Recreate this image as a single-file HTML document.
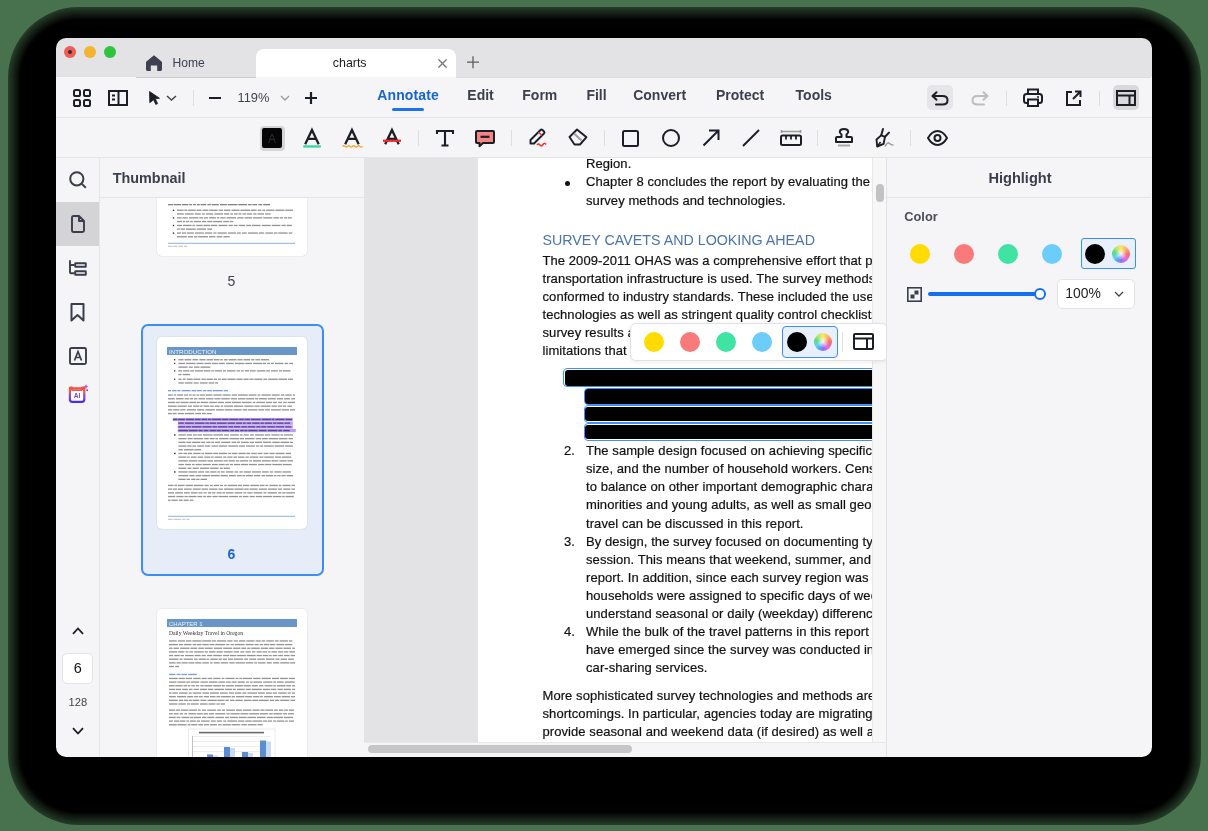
<!DOCTYPE html>
<html><head><meta charset="utf-8">
<style>
*{box-sizing:border-box;margin:0;padding:0}
html,body{width:1208px;height:831px;overflow:hidden}
body{background:#48724e;font-family:"Liberation Sans",sans-serif;position:relative}
.a{position:absolute}
.t{position:absolute;white-space:nowrap}
svg.a{overflow:visible}
#win{will-change:transform;position:absolute;left:0;top:0;width:1208px;height:831px;clip-path:inset(38px 56px 74px 56px round 10px);background:#f5f5f7}
</style></head><body>
<div class="a" style="left:7.5px;top:6.5px;width:1193.0px;height:818.0px;border-radius:71px;background:rgb(38, 60, 41)"></div><div class="a" style="left:8.5px;top:7.5px;width:1191.0px;height:816.0px;border-radius:70px;background:rgb(35, 55, 38)"></div><div class="a" style="left:9.5px;top:8.5px;width:1189.0px;height:814.0px;border-radius:69px;background:rgb(32, 51, 35)"></div><div class="a" style="left:10.5px;top:9.5px;width:1187.0px;height:812.0px;border-radius:68px;background:rgb(29, 46, 31)"></div><div class="a" style="left:11.5px;top:10.5px;width:1185.0px;height:810.0px;border-radius:67px;background:rgb(26, 41, 28)"></div><div class="a" style="left:12.5px;top:11.5px;width:1183.0px;height:808.0px;border-radius:66px;background:rgb(23, 36, 25)"></div><div class="a" style="left:13.5px;top:12.5px;width:1181.0px;height:806.0px;border-radius:65px;background:rgb(20, 31, 21)"></div><div class="a" style="left:14.5px;top:13.5px;width:1179.0px;height:804.0px;border-radius:64px;background:rgb(17, 27, 18)"></div><div class="a" style="left:15.5px;top:14.5px;width:1177.0px;height:802.0px;border-radius:63px;background:rgb(14, 22, 15)"></div><div class="a" style="left:16.5px;top:15.5px;width:1175.0px;height:800.0px;border-radius:62px;background:rgb(11, 17, 12)"></div><div class="a" style="left:17.5px;top:16.5px;width:1173.0px;height:798.0px;border-radius:61px;background:rgb(8, 12, 8)"></div><div class="a" style="left:18.5px;top:17.5px;width:1171.0px;height:796.0px;border-radius:60px;background:rgb(5, 7, 5)"></div><div class="a" style="left:19.5px;top:18.5px;width:1169.0px;height:794.0px;border-radius:59px;background:rgb(2, 2, 2)"></div><div class="a" style="left:20.5px;top:19.5px;width:1167.0px;height:792.0px;border-radius:58px;background:rgb(0, 0, 0)"></div>
<div id="win">

<div class="a" style="left:56px;top:38px;width:1100px;height:39px;background:#e3e3e6"></div>
<div class="a" style="left:64px;top:46px;width:12px;height:12px;background:#f05b56;border-radius:50%"></div>
<div class="a" style="left:84px;top:46px;width:12px;height:12px;background:#f6b42e;border-radius:50%"></div>
<div class="a" style="left:104px;top:46px;width:12px;height:12px;background:#2ec43e;border-radius:50%"></div>
<div class="a" style="left:68px;top:50px;width:4px;height:4px;background:#2a3236;border-radius:50%"></div>
<div class="a" style="left:136px;top:77px;width:120px;height:1px;background:#cbcbcf"></div>
<div class="a" style="left:456px;top:77px;width:695px;height:1px;background:#dcdce0"></div>
<div class="a" style="left:256px;top:49px;width:200px;height:28px;background:#fff;border-radius:8px 8px 0 0"></div>
<svg class="a" style="left:145px;top:54px;" width="18" height="18" viewBox="0 0 18 18"><path d="M9 1.2 L16.6 7.6 Q17 8 17 8.6 V15.6 Q17 17 15.6 17 H12.2 V11.6 H5.8 V17 H2.4 Q1 17 1 15.6 V8.6 Q1 8 1.4 7.6 Z" fill="#3d414f"/></svg>
<div class="t" style="left:172.5px;top:56.76px;font-size:12.1px;line-height:12.1px;color:#3d414f;font-weight:normal;">Home</div>
<div class="t" style="left:332.8px;top:56.50px;font-size:12.4px;line-height:12.4px;color:#1a1a1a;font-weight:normal;">charts</div>
<svg class="a" style="left:437.5px;top:58.5px;" width="9" height="9" viewBox="0 0 9 9"><path d="M0.8 0.8 L8.2 8.2 M8.2 0.8 L0.8 8.2" stroke="#777" stroke-width="1.3" stroke-linecap="round"/></svg>
<svg class="a" style="left:466.5px;top:56.3px;" width="12" height="12.5" viewBox="0 0 12 12.5"><path d="M6 0.3 V12.2 M0 6.2 H12" stroke="#5e5e5e" stroke-width="1.3"/></svg>
<div class="a" style="left:56px;top:78px;width:1100px;height:40px;background:#f5f5f7"></div>
<div class="a" style="left:56px;top:117px;width:1100px;height:1px;background:#e4e4e7"></div>
<svg class="a" style="left:73px;top:89px;" width="18" height="18" viewBox="0 0 18 18"><rect x="1" y="1" width="6" height="6" rx="1.6" fill="none" stroke="#1c1e26" stroke-width="2"/><rect x="1" y="11" width="6" height="6" rx="1.6" fill="none" stroke="#1c1e26" stroke-width="2"/><rect x="11" y="1" width="6" height="6" rx="1.6" fill="none" stroke="#1c1e26" stroke-width="2"/><rect x="11" y="11" width="6" height="6" rx="1.6" fill="none" stroke="#1c1e26" stroke-width="2"/></svg>
<svg class="a" style="left:108px;top:90px;" width="20" height="16" viewBox="0 0 20 16"><rect x="1" y="1" width="18" height="14" fill="none" stroke="#1c1e26" stroke-width="2"/><path d="M10.5 1 V15" stroke="#1c1e26" stroke-width="2"/><path d="M4 5.5 H7 M4 9.5 H7" stroke="#1c1e26" stroke-width="1.8"/></svg>
<svg class="a" style="left:149px;top:91px;" width="11" height="14" viewBox="0 0 11 14"><path d="M0.5 0.5 L10.5 7.2 L6.3 7.8 L8.6 12.6 L6.8 13.5 L4.6 8.8 L0.8 11.7 Z" fill="#1c1e26" stroke="#1c1e26" stroke-width="0.8" stroke-linejoin="round"/></svg>
<svg class="a" style="left:166px;top:95px;" width="11" height="6" viewBox="0 0 11 6"><path d="M1 1 L5.5 5 L10 1" fill="none" stroke="#444" stroke-width="1.5"/></svg>
<div class="a" style="left:193px;top:90px;width:1px;height:16px;background:#dedee2"></div>
<div class="a" style="left:209px;top:97px;width:12px;height:2.2px;background:#1c1e26"></div>
<div class="t" style="left:237.5px;top:91.96px;font-size:12.8px;line-height:12.8px;color:#40444f;font-weight:normal;">119%</div>
<svg class="a" style="left:280px;top:95px;" width="10" height="6" viewBox="0 0 10 6"><path d="M1 1 L5 5 L9 1" fill="none" stroke="#9a9a9a" stroke-width="1.3"/></svg>
<svg class="a" style="left:305px;top:92px;" width="12" height="12" viewBox="0 0 12 12"><path d="M6 0 V12 M0 6 H12" stroke="#1c1e26" stroke-width="2.2"/></svg>
<div class="t" style="left:377.2px;top:88.15px;font-size:14px;line-height:14px;color:#1565cf;font-weight:bold;letter-spacing:0.15px">Annotate</div>
<div class="t" style="left:467.3px;top:88.15px;font-size:14px;line-height:14px;color:#3c404c;font-weight:bold;">Edit</div>
<div class="t" style="left:522.3px;top:88.15px;font-size:14px;line-height:14px;color:#3c404c;font-weight:bold;">Form</div>
<div class="t" style="left:586.4px;top:88.15px;font-size:14px;line-height:14px;color:#3c404c;font-weight:bold;">Fill</div>
<div class="t" style="left:633.2px;top:88.15px;font-size:14px;line-height:14px;color:#3c404c;font-weight:bold;">Convert</div>
<div class="t" style="left:716px;top:88.15px;font-size:14px;line-height:14px;color:#3c404c;font-weight:bold;">Protect</div>
<div class="t" style="left:795.6px;top:88.15px;font-size:14px;line-height:14px;color:#3c404c;font-weight:bold;">Tools</div>
<div class="a" style="left:392px;top:108px;width:32px;height:3px;background:#1a73f0;border-radius:2px"></div>
<div class="a" style="left:927px;top:85px;width:26px;height:25px;background:#e6e6e9;border-radius:5px"></div>
<svg class="a" style="left:931px;top:91px;" width="18" height="15" viewBox="0 0 18 15"><path d="M5.5 1.2 L1.5 5 L5.5 8.8" fill="none" stroke="#1c1e26" stroke-width="2" stroke-linejoin="round" stroke-linecap="round"/><path d="M1.8 5 H11.5 Q16.5 5 16.5 9.3 Q16.5 13.6 11.5 13.6 H5" fill="none" stroke="#1c1e26" stroke-width="2" stroke-linecap="round"/></svg>
<svg class="a" style="left:971px;top:91px;" width="18" height="15" viewBox="0 0 18 15"><path d="M12.5 1.2 L16.5 5 L12.5 8.8" fill="none" stroke="#bdbdbf" stroke-width="2" stroke-linejoin="round" stroke-linecap="round"/><path d="M16.2 5 H6.5 Q1.5 5 1.5 9.3 Q1.5 13.6 6.5 13.6 H13" fill="none" stroke="#bdbdbf" stroke-width="2" stroke-linecap="round"/></svg>
<div class="a" style="left:1006px;top:91px;width:1px;height:15px;background:#dedee2"></div>
<svg class="a" style="left:1023px;top:88px;" width="20" height="19" viewBox="0 0 20 19"><path d="M5 6 V1.5 H15 V6" fill="none" stroke="#1c1e26" stroke-width="2"/><rect x="1" y="6" width="18" height="9" rx="2.5" fill="none" stroke="#1c1e26" stroke-width="2"/><rect x="5" y="11.5" width="10" height="6.5" fill="#f5f5f7" stroke="#1c1e26" stroke-width="2"/><circle cx="15" cy="9" r="1" fill="#1c1e26"/></svg>
<svg class="a" style="left:1065px;top:90px;" width="17" height="17" viewBox="0 0 17 17"><path d="M7 2 H2 V15 H15 V10" fill="none" stroke="#1c1e26" stroke-width="2"/><path d="M8 9 L15 2 M10 1.5 H15.5 V7" fill="none" stroke="#1c1e26" stroke-width="2"/></svg>
<div class="a" style="left:1099px;top:91px;width:1px;height:15px;background:#dedee2"></div>
<div class="a" style="left:1113px;top:85px;width:26px;height:25px;background:#d9d9dc;border-radius:5px"></div>
<svg class="a" style="left:1116px;top:90px;" width="20" height="16" viewBox="0 0 20 16"><rect x="1" y="1" width="18" height="14" fill="none" stroke="#1c1e26" stroke-width="2"/><path d="M1 5.5 H19 M13.5 5.5 V15" stroke="#1c1e26" stroke-width="2"/></svg>
<div class="a" style="left:56px;top:118px;width:1100px;height:39px;background:#f5f5f7"></div>
<div class="a" style="left:56px;top:157px;width:1100px;height:1px;background:#e4e4e7"></div>
<div class="a" style="left:259.5px;top:125.5px;width:25px;height:25px;background:#d5d5d8;border-radius:4px"></div>
<div class="a" style="left:262px;top:128px;width:20px;height:20px;background:#050505;border-radius:2px"></div>
<div class="t" style="left:-28px;width:600px;text-align:center;top:132.84px;font-size:12px;line-height:12px;color:#2a2d38;font-weight:normal;">A</div>
<svg class="a" style="left:303px;top:129px;" width="19" height="19" viewBox="0 0 19 19"><path d="M2.2 15.3 L8.95 0.8999999999999999 L15.7 15.3 M5.1 9.9 H12.8" fill="none" stroke="#1c1e26" stroke-width="2.25"/><rect x="0.3" y="16.3" width="17.6" height="2.3" fill="#35d69b"/></svg>
<svg class="a" style="left:342px;top:129px;" width="20" height="19" viewBox="0 0 20 19"><path d="M3.2 15.3 L9.95 0.8999999999999999 L16.7 15.3 M6.1 9.9 H13.8" fill="none" stroke="#1c1e26" stroke-width="2.25"/><path d="M0.5 17.4 q1.25 -1.6 2.5 0 t2.5 0 t2.5 0 t2.5 0 t2.5 0 t2.5 0 t2.5 0 t2.5 0" fill="none" stroke="#f4a321" stroke-width="1.3"/></svg>
<svg class="a" style="left:383px;top:129px;" width="19" height="19" viewBox="0 0 19 19"><path d="M2.2 15.3 L8.95 0.8999999999999999 L15.7 15.3 M5.1 9.9 H12.8" fill="none" stroke="#1c1e26" stroke-width="2.25"/><rect x="0" y="10.6" width="18" height="2.3" fill="#ee2a2a"/></svg>
<div class="a" style="left:418px;top:130px;width:1px;height:16px;background:#dedee2"></div>
<svg class="a" style="left:436px;top:130px;" width="18" height="17" viewBox="0 0 18 17"><path d="M1 4 V1 H17 V4 M9 1 V15.5 M5.5 15.5 H12.5" fill="none" stroke="#1c1e26" stroke-width="2.1"/></svg>
<svg class="a" style="left:475px;top:130px;" width="20" height="17" viewBox="0 0 20 17"><path d="M2 1 H18 Q19 1 19 2 V12 Q19 13 18 13 H8 L4.5 16.2 V13 H2 Q1 13 1 12 V2 Q1 1 2 1 Z" fill="#f48585" stroke="#1c1e26" stroke-width="2" stroke-linejoin="round"/><path d="M5.5 6.8 H14.5" stroke="#1c1e26" stroke-width="2.2"/></svg>
<div class="a" style="left:511px;top:130px;width:1px;height:16px;background:#dedee2"></div>
<svg class="a" style="left:529px;top:128px;" width="19" height="19" viewBox="0 0 19 19"><path d="M1.5 15.5 V12 L11.5 2 Q12.5 1 13.5 2 L15 3.5 Q16 4.5 15 5.5 L5 15.5 Z" fill="none" stroke="#1c1e26" stroke-width="1.9" stroke-linejoin="round"/><path d="M9.5 4 L13 7.5" stroke="#e33" stroke-width="1.5"/><path d="M8 17 q1.5 -2 3 0 t3 -0.5 t3 0" fill="none" stroke="#e33" stroke-width="1.5"/></svg>
<svg class="a" style="left:568px;top:128px;" width="20" height="19" viewBox="0 0 20 19"><path d="M1.5 9 L9 1.5 L18.5 9.2 L12 16.5 H6.5 Z" fill="none" stroke="#1c1e26" stroke-width="1.9" stroke-linejoin="round"/><path d="M6 5.5 L13.5 12.5" stroke="#a0a0a0" stroke-width="2"/></svg>
<div class="a" style="left:604px;top:130px;width:1px;height:16px;background:#dedee2"></div>
<svg class="a" style="left:622px;top:130px;" width="17" height="17" viewBox="0 0 17 17"><rect x="1" y="1" width="15" height="15" rx="1.5" fill="none" stroke="#1c1e26" stroke-width="2"/></svg>
<svg class="a" style="left:662px;top:129px;" width="18" height="18" viewBox="0 0 18 18"><circle cx="9" cy="9" r="8" fill="none" stroke="#1c1e26" stroke-width="2"/></svg>
<svg class="a" style="left:702px;top:129px;" width="18" height="18" viewBox="0 0 18 18"><path d="M1.5 16.5 L16.5 1.5 M7 1.5 H16.5 V11" fill="none" stroke="#1c1e26" stroke-width="2"/></svg>
<svg class="a" style="left:742px;top:129px;" width="18" height="18" viewBox="0 0 18 18"><path d="M1 17 L17 1" fill="none" stroke="#1c1e26" stroke-width="2"/></svg>
<svg class="a" style="left:780px;top:130px;" width="22" height="16" viewBox="0 0 22 16"><path d="M1 1.5 H21 M1.5 0 V3 M20.5 0 V3" stroke="#9a9a9a" stroke-width="1.6"/><rect x="1" y="5.5" width="20" height="9.5" rx="1.5" fill="none" stroke="#1c1e26" stroke-width="2"/><path d="M6 6 V9.5 M11 6 V9.5 M16 6 V9.5" stroke="#1c1e26" stroke-width="1.8"/></svg>
<div class="a" style="left:817px;top:130px;width:1px;height:16px;background:#dedee2"></div>
<svg class="a" style="left:835px;top:128px;" width="18" height="19" viewBox="0 0 18 19"><path d="M6.5 9 V6.5 Q4.5 5 4.8 3.5 Q5.3 1 9 1 Q12.7 1 13.2 3.5 Q13.5 5 11.5 6.5 V9 H16 Q17 9 17 10 V14 H1 V10 Q1 9 2 9 Z" fill="none" stroke="#1c1e26" stroke-width="2" stroke-linejoin="round"/><path d="M3 17.5 H15" stroke="#a8a8a8" stroke-width="2"/></svg>
<svg class="a" style="left:875px;top:128px;" width="20" height="20" viewBox="0 0 20 20"><path d="M8 1 L6.2 7.2 M14 4.6 L10 8.8" stroke="#1c1e26" stroke-width="2" stroke-linecap="round"/><path d="M6.2 7.4 L1.5 11.5 L2.2 18.5 L8.6 15.8 L10 8.8 Z" fill="none" stroke="#1c1e26" stroke-width="1.9" stroke-linejoin="round"/><path d="M2.2 18.5 L5.6 14" stroke="#1c1e26" stroke-width="1.6"/><path d="M10.3 18 Q12.5 13.5 14.5 15.5 Q16 17 18 17" fill="none" stroke="#a0a0a0" stroke-width="1.6" stroke-linecap="round"/></svg>
<div class="a" style="left:910px;top:130px;width:1px;height:16px;background:#dedee2"></div>
<svg class="a" style="left:927px;top:130px;" width="21" height="16" viewBox="0 0 21 16"><path d="M1 8 Q5 1 10.5 1 Q16 1 20 8 Q16 15 10.5 15 Q5 15 1 8 Z" fill="none" stroke="#1c1e26" stroke-width="2" stroke-linejoin="round"/><circle cx="10.5" cy="8" r="3" fill="none" stroke="#1c1e26" stroke-width="2"/></svg>
<div class="a" style="left:56px;top:158px;width:44px;height:600px;background:#f5f5f7"></div>
<div class="a" style="left:99px;top:158px;width:1px;height:600px;background:#e6e6e9"></div>
<div class="a" style="left:56px;top:202px;width:43px;height:44px;background:#d4d4d6"></div>
<svg class="a" style="left:68.9px;top:170.8px;" width="18" height="18" viewBox="0 0 18 18"><circle cx="7.8" cy="7.8" r="6.6" fill="none" stroke="#3a3e4a" stroke-width="2"/><path d="M12.6 12.6 L16.8 16.8" stroke="#3a3e4a" stroke-width="2"/></svg>
<svg class="a" style="left:70.9px;top:215px;" width="14" height="18" viewBox="0 0 14 18"><path d="M1 2.5 Q1 1 2.5 1 H8 L13 6 V15.5 Q13 17 11.5 17 H2.5 Q1 17 1 15.5 Z M8 1 V6 H13" fill="none" stroke="#3a3e4a" stroke-width="1.9" stroke-linejoin="round"/></svg>
<svg class="a" style="left:69px;top:260px;" width="19" height="17" viewBox="0 0 19 17"><path d="M1 0.3 V12.2 Q1 13.2 2 13.2 H5.6 M1 5 H5.6" fill="none" stroke="#3a3e4a" stroke-width="1.9"/><rect x="6.2" y="3.2" width="10.6" height="3.5" rx="0.3" fill="none" stroke="#3a3e4a" stroke-width="1.9"/><rect x="6.2" y="11.2" width="10.6" height="3.5" rx="0.3" fill="none" stroke="#3a3e4a" stroke-width="1.9"/></svg>
<svg class="a" style="left:70px;top:303px;" width="15" height="19" viewBox="0 0 15 19"><path d="M1.5 1 H13.5 V17.5 L7.5 12 L1.5 17.5 Z" fill="none" stroke="#3a3e4a" stroke-width="2" stroke-linejoin="round"/></svg>
<svg class="a" style="left:69px;top:347px;" width="18" height="18" viewBox="0 0 18 18"><rect x="1" y="1" width="16" height="16" rx="1.5" fill="none" stroke="#3a3e4a" stroke-width="1.9"/><path d="M5.5 13.5 L9 4.5 L12.5 13.5 M6.8 10.5 H11.2" fill="none" stroke="#3a3e4a" stroke-width="1.7"/></svg>
<svg class="a" style="left:68px;top:385px" width="20" height="19" viewBox="0 0 20 19"><defs><linearGradient id="aig" x1="0" y1="0" x2="0" y2="1"><stop offset="0" stop-color="#f2504a"/><stop offset="0.35" stop-color="#f0504e"/><stop offset="0.45" stop-color="#8e4cc8"/><stop offset="0.7" stop-color="#7a48d8"/><stop offset="1" stop-color="#4a28f0"/></linearGradient></defs>
<rect x="1.9" y="3.3" width="14.4" height="13.6" rx="2.6" fill="#fff" stroke="url(#aig)" stroke-width="2.2"/>
<rect x="0.8" y="1.6" width="4.6" height="3.6" rx="1.6" fill="#f2504a"/><rect x="12.8" y="1.6" width="4.6" height="3.6" rx="1.6" fill="#f2504a"/><rect x="4.2" y="4.4" width="9.8" height="1.6" fill="#f2504a"/>
<text x="9.1" y="12.7" font-family="Liberation Sans" font-weight="bold" font-size="6.6" fill="#7048c8" text-anchor="middle">AI</text>
<path d="M18 -1 L18.8 0.9 L20.6 1.6 L18.8 2.3 L18 4.2 L17.2 2.3 L15.4 1.6 L17.2 0.9 Z" fill="#c050c0"/><rect x="18.2" y="4.3" width="1.8" height="1.8" fill="#8a50d8"/></svg>
<svg class="a" style="left:72px;top:627px;" width="12" height="8" viewBox="0 0 12 8"><path d="M1 6.8 L6 1.5 L11 6.8" fill="none" stroke="#1c1e26" stroke-width="1.8"/></svg>
<div class="a" style="left:62.3px;top:653.3px;width:31.2px;height:30.5px;background:#fff;border:1px solid #e3e3e6;border-radius:5px"></div>
<div class="t" style="left:-222.1px;width:600px;text-align:center;top:660.63px;font-size:14.5px;line-height:14.5px;color:#111;font-weight:normal;">6</div>
<div class="t" style="left:-222.1px;width:600px;text-align:center;top:696.52px;font-size:11.2px;line-height:11.2px;color:#444;font-weight:normal;">128</div>
<svg class="a" style="left:72px;top:727px;" width="12" height="8" viewBox="0 0 12 8"><path d="M1 1.2 L6 6.5 L11 1.2" fill="none" stroke="#1c1e26" stroke-width="1.8"/></svg>
<div class="a" style="left:100px;top:158px;width:264px;height:600px;background:#f5f5f7"></div>
<div class="t" style="left:112.7px;top:171.01px;font-size:14.4px;line-height:14.4px;color:#3b3f4b;font-weight:bold;">Thumbnail</div>
<div class="a" style="left:100px;top:197px;width:264px;height:1px;background:#e4e4e7"></div>
<div class="a" style="left:100px;top:198px;width:264px;height:70px;overflow:hidden">
<div class="a" style="left:57px;top:-10px;width:150px;height:68px;background:#fff;border-radius:5px;box-shadow:0 0 0 0.6px rgba(0,0,0,.07)"></div>
</div>
<svg class="a" style="left:0px;top:0px" width="1208" height="831" viewBox="0 0 1208 831"><rect x="168.00" y="204.00" width="4.93" height="1.3" fill="#555" fill-opacity="0.72"/><rect x="173.70" y="204.00" width="7.38" height="1.3" fill="#555" fill-opacity="0.72"/><rect x="181.82" y="204.00" width="6.52" height="1.3" fill="#555" fill-opacity="0.72"/><rect x="189.22" y="204.00" width="2.93" height="1.3" fill="#555" fill-opacity="0.72"/><rect x="193.11" y="204.00" width="2.78" height="1.3" fill="#555" fill-opacity="0.72"/><rect x="196.81" y="204.00" width="3.02" height="1.3" fill="#555" fill-opacity="0.72"/><rect x="200.58" y="204.00" width="5.68" height="1.3" fill="#555" fill-opacity="0.72"/><rect x="207.38" y="204.00" width="3.43" height="1.3" fill="#555" fill-opacity="0.72"/><rect x="211.62" y="204.00" width="7.21" height="1.3" fill="#555" fill-opacity="0.72"/><rect x="220.00" y="204.00" width="6.83" height="1.3" fill="#555" fill-opacity="0.72"/><rect x="227.72" y="204.00" width="9.82" height="1.3" fill="#555" fill-opacity="0.72"/><rect x="238.27" y="204.00" width="8.94" height="1.3" fill="#555" fill-opacity="0.72"/><rect x="248.05" y="204.00" width="3.58" height="1.3" fill="#555" fill-opacity="0.72"/><rect x="252.39" y="204.00" width="4.81" height="1.3" fill="#555" fill-opacity="0.72"/><rect x="258.32" y="204.00" width="3.86" height="1.3" fill="#555" fill-opacity="0.72"/><rect x="263.16" y="204.00" width="6.84" height="1.3" fill="#555" fill-opacity="0.72"/><rect x="172.8" y="209.6" width="1.4" height="1.4" fill="#333"/><rect x="177.00" y="209.60" width="6.61" height="1.3" fill="#6a6a6a" fill-opacity="0.72"/><rect x="184.34" y="209.60" width="2.95" height="1.3" fill="#6a6a6a" fill-opacity="0.72"/><rect x="188.09" y="209.60" width="7.60" height="1.3" fill="#6a6a6a" fill-opacity="0.72"/><rect x="196.61" y="209.60" width="4.86" height="1.3" fill="#6a6a6a" fill-opacity="0.72"/><rect x="202.46" y="209.60" width="5.90" height="1.3" fill="#6a6a6a" fill-opacity="0.72"/><rect x="209.20" y="209.60" width="8.46" height="1.3" fill="#6a6a6a" fill-opacity="0.72"/><rect x="218.71" y="209.60" width="4.33" height="1.3" fill="#6a6a6a" fill-opacity="0.72"/><rect x="224.03" y="209.60" width="6.44" height="1.3" fill="#6a6a6a" fill-opacity="0.72"/><rect x="231.61" y="209.60" width="7.97" height="1.3" fill="#6a6a6a" fill-opacity="0.72"/><rect x="240.42" y="209.60" width="9.85" height="1.3" fill="#6a6a6a" fill-opacity="0.72"/><rect x="251.03" y="209.60" width="5.64" height="1.3" fill="#6a6a6a" fill-opacity="0.72"/><rect x="257.75" y="209.60" width="3.64" height="1.3" fill="#6a6a6a" fill-opacity="0.72"/><rect x="262.33" y="209.60" width="2.79" height="1.3" fill="#6a6a6a" fill-opacity="0.72"/><rect x="266.16" y="209.60" width="8.23" height="1.3" fill="#6a6a6a" fill-opacity="0.72"/><rect x="275.38" y="209.60" width="9.07" height="1.3" fill="#6a6a6a" fill-opacity="0.72"/><rect x="285.30" y="209.60" width="7.71" height="1.3" fill="#6a6a6a" fill-opacity="0.72"/><rect x="177.00" y="213.30" width="6.85" height="1.3" fill="#6a6a6a" fill-opacity="0.72"/><rect x="184.78" y="213.30" width="8.80" height="1.3" fill="#6a6a6a" fill-opacity="0.72"/><rect x="194.75" y="213.30" width="6.06" height="1.3" fill="#6a6a6a" fill-opacity="0.72"/><rect x="201.84" y="213.30" width="2.96" height="1.3" fill="#6a6a6a" fill-opacity="0.72"/><rect x="205.84" y="213.30" width="7.35" height="1.3" fill="#6a6a6a" fill-opacity="0.72"/><rect x="214.39" y="213.30" width="8.66" height="1.3" fill="#6a6a6a" fill-opacity="0.72"/><rect x="223.90" y="213.30" width="5.39" height="1.3" fill="#6a6a6a" fill-opacity="0.72"/><rect x="230.33" y="213.30" width="2.67" height="1.3" fill="#6a6a6a" fill-opacity="0.72"/><rect x="233.93" y="213.30" width="3.76" height="1.3" fill="#6a6a6a" fill-opacity="0.72"/><rect x="238.45" y="213.30" width="2.94" height="1.3" fill="#6a6a6a" fill-opacity="0.72"/><rect x="242.47" y="213.30" width="3.47" height="1.3" fill="#6a6a6a" fill-opacity="0.72"/><rect x="246.77" y="213.30" width="5.43" height="1.3" fill="#6a6a6a" fill-opacity="0.72"/><rect x="253.33" y="213.30" width="3.10" height="1.3" fill="#6a6a6a" fill-opacity="0.72"/><rect x="257.36" y="213.30" width="6.62" height="1.3" fill="#6a6a6a" fill-opacity="0.72"/><rect x="265.13" y="213.30" width="5.47" height="1.3" fill="#6a6a6a" fill-opacity="0.72"/><rect x="172.8" y="217.2" width="1.4" height="1.4" fill="#333"/><rect x="177.00" y="217.20" width="4.59" height="1.3" fill="#6a6a6a" fill-opacity="0.72"/><rect x="182.50" y="217.20" width="5.19" height="1.3" fill="#6a6a6a" fill-opacity="0.72"/><rect x="188.83" y="217.20" width="9.68" height="1.3" fill="#6a6a6a" fill-opacity="0.72"/><rect x="199.29" y="217.20" width="3.82" height="1.3" fill="#6a6a6a" fill-opacity="0.72"/><rect x="203.92" y="217.20" width="4.25" height="1.3" fill="#6a6a6a" fill-opacity="0.72"/><rect x="209.12" y="217.20" width="6.92" height="1.3" fill="#6a6a6a" fill-opacity="0.72"/><rect x="216.87" y="217.20" width="2.53" height="1.3" fill="#6a6a6a" fill-opacity="0.72"/><rect x="220.31" y="217.20" width="5.27" height="1.3" fill="#6a6a6a" fill-opacity="0.72"/><rect x="226.56" y="217.20" width="9.65" height="1.3" fill="#6a6a6a" fill-opacity="0.72"/><rect x="237.25" y="217.20" width="6.37" height="1.3" fill="#6a6a6a" fill-opacity="0.72"/><rect x="244.63" y="217.20" width="7.57" height="1.3" fill="#6a6a6a" fill-opacity="0.72"/><rect x="252.93" y="217.20" width="9.25" height="1.3" fill="#6a6a6a" fill-opacity="0.72"/><rect x="263.26" y="217.20" width="9.06" height="1.3" fill="#6a6a6a" fill-opacity="0.72"/><rect x="273.42" y="217.20" width="5.44" height="1.3" fill="#6a6a6a" fill-opacity="0.72"/><rect x="279.76" y="217.20" width="3.28" height="1.3" fill="#6a6a6a" fill-opacity="0.72"/><rect x="284.06" y="217.20" width="2.97" height="1.3" fill="#6a6a6a" fill-opacity="0.72"/><rect x="287.76" y="217.20" width="4.07" height="1.3" fill="#6a6a6a" fill-opacity="0.72"/><rect x="177.00" y="220.90" width="5.05" height="1.3" fill="#6a6a6a" fill-opacity="0.72"/><rect x="182.78" y="220.90" width="2.50" height="1.3" fill="#6a6a6a" fill-opacity="0.72"/><rect x="186.05" y="220.90" width="3.26" height="1.3" fill="#6a6a6a" fill-opacity="0.72"/><rect x="190.20" y="220.90" width="2.69" height="1.3" fill="#6a6a6a" fill-opacity="0.72"/><rect x="194.03" y="220.90" width="7.11" height="1.3" fill="#6a6a6a" fill-opacity="0.72"/><rect x="201.91" y="220.90" width="4.39" height="1.3" fill="#6a6a6a" fill-opacity="0.72"/><rect x="207.17" y="220.90" width="5.23" height="1.3" fill="#6a6a6a" fill-opacity="0.72"/><rect x="213.16" y="220.90" width="8.87" height="1.3" fill="#6a6a6a" fill-opacity="0.72"/><rect x="223.23" y="220.90" width="5.99" height="1.3" fill="#6a6a6a" fill-opacity="0.72"/><rect x="230.16" y="220.90" width="3.14" height="1.3" fill="#6a6a6a" fill-opacity="0.72"/><rect x="172.8" y="224.8" width="1.4" height="1.4" fill="#333"/><rect x="177.00" y="224.80" width="5.07" height="1.3" fill="#6a6a6a" fill-opacity="0.72"/><rect x="182.90" y="224.80" width="8.72" height="1.3" fill="#6a6a6a" fill-opacity="0.72"/><rect x="192.40" y="224.80" width="2.67" height="1.3" fill="#6a6a6a" fill-opacity="0.72"/><rect x="196.25" y="224.80" width="6.46" height="1.3" fill="#6a6a6a" fill-opacity="0.72"/><rect x="203.48" y="224.80" width="6.57" height="1.3" fill="#6a6a6a" fill-opacity="0.72"/><rect x="210.77" y="224.80" width="6.46" height="1.3" fill="#6a6a6a" fill-opacity="0.72"/><rect x="218.42" y="224.80" width="8.97" height="1.3" fill="#6a6a6a" fill-opacity="0.72"/><rect x="228.44" y="224.80" width="4.46" height="1.3" fill="#6a6a6a" fill-opacity="0.72"/><rect x="233.79" y="224.80" width="3.75" height="1.3" fill="#6a6a6a" fill-opacity="0.72"/><rect x="238.62" y="224.80" width="6.49" height="1.3" fill="#6a6a6a" fill-opacity="0.72"/><rect x="246.21" y="224.80" width="4.97" height="1.3" fill="#6a6a6a" fill-opacity="0.72"/><rect x="251.99" y="224.80" width="8.59" height="1.3" fill="#6a6a6a" fill-opacity="0.72"/><rect x="261.77" y="224.80" width="8.89" height="1.3" fill="#6a6a6a" fill-opacity="0.72"/><rect x="271.77" y="224.80" width="8.64" height="1.3" fill="#6a6a6a" fill-opacity="0.72"/><rect x="281.48" y="224.80" width="4.20" height="1.3" fill="#6a6a6a" fill-opacity="0.72"/><rect x="286.64" y="224.80" width="5.17" height="1.3" fill="#6a6a6a" fill-opacity="0.72"/><rect x="177.00" y="228.50" width="2.71" height="1.3" fill="#6a6a6a" fill-opacity="0.72"/><rect x="180.55" y="228.50" width="4.44" height="1.3" fill="#6a6a6a" fill-opacity="0.72"/><rect x="186.04" y="228.50" width="9.67" height="1.3" fill="#6a6a6a" fill-opacity="0.72"/><rect x="196.64" y="228.50" width="9.53" height="1.3" fill="#6a6a6a" fill-opacity="0.72"/><rect x="207.36" y="228.50" width="4.74" height="1.3" fill="#6a6a6a" fill-opacity="0.72"/><rect x="172.8" y="232.4" width="1.4" height="1.4" fill="#333"/><rect x="177.00" y="232.40" width="4.15" height="1.3" fill="#6a6a6a" fill-opacity="0.72"/><rect x="181.97" y="232.40" width="3.98" height="1.3" fill="#6a6a6a" fill-opacity="0.72"/><rect x="186.74" y="232.40" width="7.18" height="1.3" fill="#6a6a6a" fill-opacity="0.72"/><rect x="195.08" y="232.40" width="8.80" height="1.3" fill="#6a6a6a" fill-opacity="0.72"/><rect x="204.82" y="232.40" width="7.40" height="1.3" fill="#6a6a6a" fill-opacity="0.72"/><rect x="213.32" y="232.40" width="3.14" height="1.3" fill="#6a6a6a" fill-opacity="0.72"/><rect x="217.48" y="232.40" width="9.32" height="1.3" fill="#6a6a6a" fill-opacity="0.72"/><rect x="227.90" y="232.40" width="8.13" height="1.3" fill="#6a6a6a" fill-opacity="0.72"/><rect x="236.96" y="232.40" width="3.84" height="1.3" fill="#6a6a6a" fill-opacity="0.72"/><rect x="241.89" y="232.40" width="4.99" height="1.3" fill="#6a6a6a" fill-opacity="0.72"/><rect x="247.99" y="232.40" width="9.79" height="1.3" fill="#6a6a6a" fill-opacity="0.72"/><rect x="258.67" y="232.40" width="5.51" height="1.3" fill="#6a6a6a" fill-opacity="0.72"/><rect x="265.36" y="232.40" width="7.94" height="1.3" fill="#6a6a6a" fill-opacity="0.72"/><rect x="274.08" y="232.40" width="3.45" height="1.3" fill="#6a6a6a" fill-opacity="0.72"/><rect x="278.31" y="232.40" width="9.29" height="1.3" fill="#6a6a6a" fill-opacity="0.72"/><rect x="288.70" y="232.40" width="3.60" height="1.3" fill="#6a6a6a" fill-opacity="0.72"/><rect x="177.00" y="236.10" width="9.85" height="1.3" fill="#6a6a6a" fill-opacity="0.72"/><rect x="187.88" y="236.10" width="5.13" height="1.3" fill="#6a6a6a" fill-opacity="0.72"/><rect x="193.98" y="236.10" width="3.48" height="1.3" fill="#6a6a6a" fill-opacity="0.72"/><rect x="198.17" y="236.10" width="9.78" height="1.3" fill="#6a6a6a" fill-opacity="0.72"/><rect x="208.98" y="236.10" width="6.45" height="1.3" fill="#6a6a6a" fill-opacity="0.72"/><rect x="216.60" y="236.10" width="5.75" height="1.3" fill="#6a6a6a" fill-opacity="0.72"/><rect x="223.48" y="236.10" width="6.17" height="1.3" fill="#6a6a6a" fill-opacity="0.72"/><rect x="168" y="242.8" width="127" height="1" fill="#8fb0d8"/><rect x="168.00" y="245.80" width="4.39" height="0.9" fill="#999" fill-opacity="0.72"/><rect x="173.24" y="245.80" width="4.30" height="0.9" fill="#999" fill-opacity="0.72"/><rect x="178.53" y="245.80" width="4.45" height="0.9" fill="#999" fill-opacity="0.72"/><rect x="183.89" y="245.80" width="3.48" height="0.9" fill="#999" fill-opacity="0.72"/></svg>
<div class="t" style="left:-68.5px;width:600px;text-align:center;top:274.05px;font-size:14px;line-height:14px;color:#3c3f48;font-weight:normal;">5</div>
<div class="a" style="left:140.5px;top:323.5px;width:183px;height:252px;background:#e6edf8;border:2px solid #3b8ef3;border-radius:7px"></div>
<div class="a" style="left:157px;top:337px;width:150px;height:192px;background:#fff;border-radius:5px;box-shadow:0 0 0 0.6px rgba(0,0,0,.07)"></div>
<div class="a" style="left:167px;top:347px;width:130px;height:8px;background:#6896c8"></div>
<svg class="a" style="left:0px;top:0px" width="1208" height="831" viewBox="0 0 1208 831"><text x="169" y="353.6" font-family="Liberation Sans" font-size="6.2" fill="#eef3fa">INTRODUCTION</text><rect x="174" y="359.1" width="1.3" height="1.3" fill="#333"/><rect x="178.40" y="359.10" width="5.15" height="1.3" fill="#6a6a6a" fill-opacity="0.72"/><rect x="184.48" y="359.10" width="6.88" height="1.3" fill="#6a6a6a" fill-opacity="0.72"/><rect x="192.51" y="359.10" width="5.65" height="1.3" fill="#6a6a6a" fill-opacity="0.72"/><rect x="199.32" y="359.10" width="6.26" height="1.3" fill="#6a6a6a" fill-opacity="0.72"/><rect x="206.55" y="359.10" width="6.43" height="1.3" fill="#6a6a6a" fill-opacity="0.72"/><rect x="213.69" y="359.10" width="5.80" height="1.3" fill="#6a6a6a" fill-opacity="0.72"/><rect x="220.28" y="359.10" width="2.53" height="1.3" fill="#6a6a6a" fill-opacity="0.72"/><rect x="223.91" y="359.10" width="3.79" height="1.3" fill="#6a6a6a" fill-opacity="0.72"/><rect x="228.64" y="359.10" width="7.94" height="1.3" fill="#6a6a6a" fill-opacity="0.72"/><rect x="237.56" y="359.10" width="4.94" height="1.3" fill="#6a6a6a" fill-opacity="0.72"/><rect x="243.46" y="359.10" width="6.67" height="1.3" fill="#6a6a6a" fill-opacity="0.72"/><rect x="251.22" y="359.10" width="3.30" height="1.3" fill="#6a6a6a" fill-opacity="0.72"/><rect x="255.49" y="359.10" width="4.36" height="1.3" fill="#6a6a6a" fill-opacity="0.72"/><rect x="260.70" y="359.10" width="8.29" height="1.3" fill="#6a6a6a" fill-opacity="0.72"/><rect x="174" y="362.8" width="1.3" height="1.3" fill="#333"/><rect x="178.40" y="362.80" width="6.71" height="1.3" fill="#6a6a6a" fill-opacity="0.72"/><rect x="186.19" y="362.80" width="9.34" height="1.3" fill="#6a6a6a" fill-opacity="0.72"/><rect x="196.46" y="362.80" width="7.09" height="1.3" fill="#6a6a6a" fill-opacity="0.72"/><rect x="204.50" y="362.80" width="6.34" height="1.3" fill="#6a6a6a" fill-opacity="0.72"/><rect x="211.89" y="362.80" width="5.89" height="1.3" fill="#6a6a6a" fill-opacity="0.72"/><rect x="218.75" y="362.80" width="6.09" height="1.3" fill="#6a6a6a" fill-opacity="0.72"/><rect x="226.01" y="362.80" width="7.74" height="1.3" fill="#6a6a6a" fill-opacity="0.72"/><rect x="234.89" y="362.80" width="9.57" height="1.3" fill="#6a6a6a" fill-opacity="0.72"/><rect x="245.29" y="362.80" width="6.70" height="1.3" fill="#6a6a6a" fill-opacity="0.72"/><rect x="253.15" y="362.80" width="8.80" height="1.3" fill="#6a6a6a" fill-opacity="0.72"/><rect x="262.72" y="362.80" width="3.41" height="1.3" fill="#6a6a6a" fill-opacity="0.72"/><rect x="267.06" y="362.80" width="3.04" height="1.3" fill="#6a6a6a" fill-opacity="0.72"/><rect x="270.92" y="362.80" width="3.05" height="1.3" fill="#6a6a6a" fill-opacity="0.72"/><rect x="275.00" y="362.80" width="8.38" height="1.3" fill="#6a6a6a" fill-opacity="0.72"/><rect x="284.53" y="362.80" width="3.66" height="1.3" fill="#6a6a6a" fill-opacity="0.72"/><rect x="289.25" y="362.80" width="3.75" height="1.3" fill="#6a6a6a" fill-opacity="0.72"/><rect x="178.40" y="366.50" width="9.12" height="1.3" fill="#6a6a6a" fill-opacity="0.72"/><rect x="188.71" y="366.50" width="4.15" height="1.3" fill="#6a6a6a" fill-opacity="0.72"/><rect x="194.03" y="366.50" width="5.49" height="1.3" fill="#6a6a6a" fill-opacity="0.72"/><rect x="200.46" y="366.50" width="9.92" height="1.3" fill="#6a6a6a" fill-opacity="0.72"/><rect x="174" y="370.2" width="1.3" height="1.3" fill="#333"/><rect x="178.40" y="370.20" width="3.71" height="1.3" fill="#6a6a6a" fill-opacity="0.72"/><rect x="183.03" y="370.20" width="6.37" height="1.3" fill="#6a6a6a" fill-opacity="0.72"/><rect x="190.26" y="370.20" width="3.97" height="1.3" fill="#6a6a6a" fill-opacity="0.72"/><rect x="195.09" y="370.20" width="7.92" height="1.3" fill="#6a6a6a" fill-opacity="0.72"/><rect x="203.72" y="370.20" width="6.66" height="1.3" fill="#6a6a6a" fill-opacity="0.72"/><rect x="211.29" y="370.20" width="2.64" height="1.3" fill="#6a6a6a" fill-opacity="0.72"/><rect x="214.79" y="370.20" width="7.18" height="1.3" fill="#6a6a6a" fill-opacity="0.72"/><rect x="222.93" y="370.20" width="2.98" height="1.3" fill="#6a6a6a" fill-opacity="0.72"/><rect x="227.10" y="370.20" width="8.41" height="1.3" fill="#6a6a6a" fill-opacity="0.72"/><rect x="236.70" y="370.20" width="3.29" height="1.3" fill="#6a6a6a" fill-opacity="0.72"/><rect x="240.82" y="370.20" width="2.80" height="1.3" fill="#6a6a6a" fill-opacity="0.72"/><rect x="244.71" y="370.20" width="4.53" height="1.3" fill="#6a6a6a" fill-opacity="0.72"/><rect x="250.00" y="370.20" width="5.67" height="1.3" fill="#6a6a6a" fill-opacity="0.72"/><rect x="256.82" y="370.20" width="8.64" height="1.3" fill="#6a6a6a" fill-opacity="0.72"/><rect x="266.29" y="370.20" width="3.62" height="1.3" fill="#6a6a6a" fill-opacity="0.72"/><rect x="271.07" y="370.20" width="6.78" height="1.3" fill="#6a6a6a" fill-opacity="0.72"/><rect x="278.90" y="370.20" width="3.17" height="1.3" fill="#6a6a6a" fill-opacity="0.72"/><rect x="282.80" y="370.20" width="7.66" height="1.3" fill="#6a6a6a" fill-opacity="0.72"/><rect x="178.40" y="373.90" width="3.04" height="1.3" fill="#6a6a6a" fill-opacity="0.72"/><rect x="182.61" y="373.90" width="7.25" height="1.3" fill="#6a6a6a" fill-opacity="0.72"/><rect x="174" y="378.6" width="1.3" height="1.3" fill="#333"/><rect x="178.40" y="378.60" width="3.13" height="1.3" fill="#6a6a6a" fill-opacity="0.72"/><rect x="182.66" y="378.60" width="3.00" height="1.3" fill="#6a6a6a" fill-opacity="0.72"/><rect x="186.79" y="378.60" width="5.90" height="1.3" fill="#6a6a6a" fill-opacity="0.72"/><rect x="193.56" y="378.60" width="6.65" height="1.3" fill="#6a6a6a" fill-opacity="0.72"/><rect x="201.37" y="378.60" width="4.51" height="1.3" fill="#6a6a6a" fill-opacity="0.72"/><rect x="206.64" y="378.60" width="6.45" height="1.3" fill="#6a6a6a" fill-opacity="0.72"/><rect x="213.92" y="378.60" width="3.32" height="1.3" fill="#6a6a6a" fill-opacity="0.72"/><rect x="218.02" y="378.60" width="2.88" height="1.3" fill="#6a6a6a" fill-opacity="0.72"/><rect x="221.70" y="378.60" width="4.84" height="1.3" fill="#6a6a6a" fill-opacity="0.72"/><rect x="227.39" y="378.60" width="8.20" height="1.3" fill="#6a6a6a" fill-opacity="0.72"/><rect x="236.43" y="378.60" width="6.25" height="1.3" fill="#6a6a6a" fill-opacity="0.72"/><rect x="243.47" y="378.60" width="5.10" height="1.3" fill="#6a6a6a" fill-opacity="0.72"/><rect x="249.28" y="378.60" width="4.38" height="1.3" fill="#6a6a6a" fill-opacity="0.72"/><rect x="254.37" y="378.60" width="8.00" height="1.3" fill="#6a6a6a" fill-opacity="0.72"/><rect x="263.34" y="378.60" width="3.92" height="1.3" fill="#6a6a6a" fill-opacity="0.72"/><rect x="268.20" y="378.60" width="9.51" height="1.3" fill="#6a6a6a" fill-opacity="0.72"/><rect x="278.46" y="378.60" width="8.64" height="1.3" fill="#6a6a6a" fill-opacity="0.72"/><rect x="288.02" y="378.60" width="4.98" height="1.3" fill="#6a6a6a" fill-opacity="0.72"/><rect x="178.40" y="382.30" width="5.45" height="1.3" fill="#6a6a6a" fill-opacity="0.72"/><rect x="184.80" y="382.30" width="7.66" height="1.3" fill="#6a6a6a" fill-opacity="0.72"/><rect x="193.65" y="382.30" width="5.07" height="1.3" fill="#6a6a6a" fill-opacity="0.72"/><rect x="199.84" y="382.30" width="7.80" height="1.3" fill="#6a6a6a" fill-opacity="0.72"/><rect x="208.66" y="382.30" width="5.54" height="1.3" fill="#6a6a6a" fill-opacity="0.72"/><rect x="215.06" y="382.30" width="2.91" height="1.3" fill="#6a6a6a" fill-opacity="0.72"/><rect x="168.00" y="390.00" width="3.03" height="1.3" fill="#6a93cc" fill-opacity="0.9"/><rect x="172.10" y="390.00" width="4.42" height="1.3" fill="#6a93cc" fill-opacity="0.9"/><rect x="177.30" y="390.00" width="3.13" height="1.3" fill="#6a93cc" fill-opacity="0.9"/><rect x="181.55" y="390.00" width="9.03" height="1.3" fill="#6a93cc" fill-opacity="0.9"/><rect x="191.62" y="390.00" width="4.61" height="1.3" fill="#6a93cc" fill-opacity="0.9"/><rect x="197.05" y="390.00" width="4.70" height="1.3" fill="#6a93cc" fill-opacity="0.9"/><rect x="202.68" y="390.00" width="3.68" height="1.3" fill="#6a93cc" fill-opacity="0.9"/><rect x="207.29" y="390.00" width="4.47" height="1.3" fill="#6a93cc" fill-opacity="0.9"/><rect x="212.94" y="390.00" width="9.79" height="1.3" fill="#6a93cc" fill-opacity="0.9"/><rect x="223.71" y="390.00" width="4.29" height="1.3" fill="#6a93cc" fill-opacity="0.9"/><rect x="168.00" y="394.40" width="4.82" height="1.3" fill="#6a6a6a" fill-opacity="0.72"/><rect x="173.70" y="394.40" width="2.51" height="1.3" fill="#6a6a6a" fill-opacity="0.72"/><rect x="177.10" y="394.40" width="6.06" height="1.3" fill="#6a6a6a" fill-opacity="0.72"/><rect x="184.11" y="394.40" width="4.01" height="1.3" fill="#6a6a6a" fill-opacity="0.72"/><rect x="189.07" y="394.40" width="2.54" height="1.3" fill="#6a6a6a" fill-opacity="0.72"/><rect x="192.44" y="394.40" width="3.17" height="1.3" fill="#6a6a6a" fill-opacity="0.72"/><rect x="196.51" y="394.40" width="2.81" height="1.3" fill="#6a6a6a" fill-opacity="0.72"/><rect x="200.04" y="394.40" width="4.78" height="1.3" fill="#6a6a6a" fill-opacity="0.72"/><rect x="205.63" y="394.40" width="6.89" height="1.3" fill="#6a6a6a" fill-opacity="0.72"/><rect x="213.49" y="394.40" width="8.13" height="1.3" fill="#6a6a6a" fill-opacity="0.72"/><rect x="222.65" y="394.40" width="7.87" height="1.3" fill="#6a6a6a" fill-opacity="0.72"/><rect x="231.66" y="394.40" width="5.42" height="1.3" fill="#6a6a6a" fill-opacity="0.72"/><rect x="237.94" y="394.40" width="9.89" height="1.3" fill="#6a6a6a" fill-opacity="0.72"/><rect x="248.60" y="394.40" width="7.93" height="1.3" fill="#6a6a6a" fill-opacity="0.72"/><rect x="257.55" y="394.40" width="2.83" height="1.3" fill="#6a6a6a" fill-opacity="0.72"/><rect x="261.50" y="394.40" width="9.19" height="1.3" fill="#6a6a6a" fill-opacity="0.72"/><rect x="271.70" y="394.40" width="8.00" height="1.3" fill="#6a6a6a" fill-opacity="0.72"/><rect x="280.81" y="394.40" width="3.54" height="1.3" fill="#6a6a6a" fill-opacity="0.72"/><rect x="285.32" y="394.40" width="6.28" height="1.3" fill="#6a6a6a" fill-opacity="0.72"/><rect x="292.72" y="394.40" width="2.28" height="1.3" fill="#6a6a6a" fill-opacity="0.72"/><rect x="168.00" y="398.10" width="6.88" height="1.3" fill="#6a6a6a" fill-opacity="0.72"/><rect x="176.03" y="398.10" width="7.62" height="1.3" fill="#6a6a6a" fill-opacity="0.72"/><rect x="184.70" y="398.10" width="4.22" height="1.3" fill="#6a6a6a" fill-opacity="0.72"/><rect x="189.64" y="398.10" width="3.50" height="1.3" fill="#6a6a6a" fill-opacity="0.72"/><rect x="194.01" y="398.10" width="3.29" height="1.3" fill="#6a6a6a" fill-opacity="0.72"/><rect x="198.42" y="398.10" width="6.69" height="1.3" fill="#6a6a6a" fill-opacity="0.72"/><rect x="206.12" y="398.10" width="7.20" height="1.3" fill="#6a6a6a" fill-opacity="0.72"/><rect x="214.36" y="398.10" width="6.17" height="1.3" fill="#6a6a6a" fill-opacity="0.72"/><rect x="221.23" y="398.10" width="8.48" height="1.3" fill="#6a6a6a" fill-opacity="0.72"/><rect x="230.79" y="398.10" width="6.27" height="1.3" fill="#6a6a6a" fill-opacity="0.72"/><rect x="238.03" y="398.10" width="7.44" height="1.3" fill="#6a6a6a" fill-opacity="0.72"/><rect x="246.20" y="398.10" width="8.03" height="1.3" fill="#6a6a6a" fill-opacity="0.72"/><rect x="255.06" y="398.10" width="3.06" height="1.3" fill="#6a6a6a" fill-opacity="0.72"/><rect x="258.95" y="398.10" width="7.97" height="1.3" fill="#6a6a6a" fill-opacity="0.72"/><rect x="267.72" y="398.10" width="8.05" height="1.3" fill="#6a6a6a" fill-opacity="0.72"/><rect x="276.96" y="398.10" width="6.20" height="1.3" fill="#6a6a6a" fill-opacity="0.72"/><rect x="284.05" y="398.10" width="6.09" height="1.3" fill="#6a6a6a" fill-opacity="0.72"/><rect x="291.19" y="398.10" width="3.81" height="1.3" fill="#6a6a6a" fill-opacity="0.72"/><rect x="168.00" y="401.80" width="7.32" height="1.3" fill="#6a6a6a" fill-opacity="0.72"/><rect x="176.06" y="401.80" width="3.61" height="1.3" fill="#6a6a6a" fill-opacity="0.72"/><rect x="180.49" y="401.80" width="8.07" height="1.3" fill="#6a6a6a" fill-opacity="0.72"/><rect x="189.42" y="401.80" width="6.76" height="1.3" fill="#6a6a6a" fill-opacity="0.72"/><rect x="196.88" y="401.80" width="2.95" height="1.3" fill="#6a6a6a" fill-opacity="0.72"/><rect x="200.67" y="401.80" width="7.54" height="1.3" fill="#6a6a6a" fill-opacity="0.72"/><rect x="209.26" y="401.80" width="7.57" height="1.3" fill="#6a6a6a" fill-opacity="0.72"/><rect x="217.67" y="401.80" width="6.37" height="1.3" fill="#6a6a6a" fill-opacity="0.72"/><rect x="224.98" y="401.80" width="6.00" height="1.3" fill="#6a6a6a" fill-opacity="0.72"/><rect x="231.73" y="401.80" width="9.20" height="1.3" fill="#6a6a6a" fill-opacity="0.72"/><rect x="241.74" y="401.80" width="9.84" height="1.3" fill="#6a6a6a" fill-opacity="0.72"/><rect x="252.74" y="401.80" width="2.63" height="1.3" fill="#6a6a6a" fill-opacity="0.72"/><rect x="256.30" y="401.80" width="8.65" height="1.3" fill="#6a6a6a" fill-opacity="0.72"/><rect x="266.13" y="401.80" width="5.87" height="1.3" fill="#6a6a6a" fill-opacity="0.72"/><rect x="272.84" y="401.80" width="4.07" height="1.3" fill="#6a6a6a" fill-opacity="0.72"/><rect x="278.09" y="401.80" width="4.08" height="1.3" fill="#6a6a6a" fill-opacity="0.72"/><rect x="283.16" y="401.80" width="3.56" height="1.3" fill="#6a6a6a" fill-opacity="0.72"/><rect x="287.68" y="401.80" width="7.32" height="1.3" fill="#6a6a6a" fill-opacity="0.72"/><rect x="168.00" y="405.50" width="8.65" height="1.3" fill="#6a6a6a" fill-opacity="0.72"/><rect x="177.61" y="405.50" width="9.15" height="1.3" fill="#6a6a6a" fill-opacity="0.72"/><rect x="187.81" y="405.50" width="4.24" height="1.3" fill="#6a6a6a" fill-opacity="0.72"/><rect x="193.19" y="405.50" width="6.15" height="1.3" fill="#6a6a6a" fill-opacity="0.72"/><rect x="200.05" y="405.50" width="2.53" height="1.3" fill="#6a6a6a" fill-opacity="0.72"/><rect x="203.52" y="405.50" width="5.88" height="1.3" fill="#6a6a6a" fill-opacity="0.72"/><rect x="210.26" y="405.50" width="3.56" height="1.3" fill="#6a6a6a" fill-opacity="0.72"/><rect x="214.68" y="405.50" width="4.87" height="1.3" fill="#6a6a6a" fill-opacity="0.72"/><rect x="220.67" y="405.50" width="2.51" height="1.3" fill="#6a6a6a" fill-opacity="0.72"/><rect x="224.26" y="405.50" width="8.79" height="1.3" fill="#6a6a6a" fill-opacity="0.72"/><rect x="233.82" y="405.50" width="9.45" height="1.3" fill="#6a6a6a" fill-opacity="0.72"/><rect x="244.32" y="405.50" width="9.26" height="1.3" fill="#6a6a6a" fill-opacity="0.72"/><rect x="254.43" y="405.50" width="5.29" height="1.3" fill="#6a6a6a" fill-opacity="0.72"/><rect x="260.62" y="405.50" width="9.99" height="1.3" fill="#6a6a6a" fill-opacity="0.72"/><rect x="271.60" y="405.50" width="5.21" height="1.3" fill="#6a6a6a" fill-opacity="0.72"/><rect x="277.72" y="405.50" width="4.56" height="1.3" fill="#6a6a6a" fill-opacity="0.72"/><rect x="283.01" y="405.50" width="3.26" height="1.3" fill="#6a6a6a" fill-opacity="0.72"/><rect x="287.39" y="405.50" width="4.64" height="1.3" fill="#6a6a6a" fill-opacity="0.72"/><rect x="168.00" y="409.20" width="4.37" height="1.3" fill="#6a6a6a" fill-opacity="0.72"/><rect x="173.20" y="409.20" width="6.33" height="1.3" fill="#6a6a6a" fill-opacity="0.72"/><rect x="180.33" y="409.20" width="5.30" height="1.3" fill="#6a6a6a" fill-opacity="0.72"/><rect x="186.81" y="409.20" width="9.13" height="1.3" fill="#6a6a6a" fill-opacity="0.72"/><rect x="197.05" y="409.20" width="7.23" height="1.3" fill="#6a6a6a" fill-opacity="0.72"/><rect x="205.43" y="409.20" width="9.56" height="1.3" fill="#6a6a6a" fill-opacity="0.72"/><rect x="215.96" y="409.20" width="7.90" height="1.3" fill="#6a6a6a" fill-opacity="0.72"/><rect x="224.59" y="409.20" width="7.99" height="1.3" fill="#6a6a6a" fill-opacity="0.72"/><rect x="233.50" y="409.20" width="8.15" height="1.3" fill="#6a6a6a" fill-opacity="0.72"/><rect x="242.67" y="409.20" width="4.65" height="1.3" fill="#6a6a6a" fill-opacity="0.72"/><rect x="248.04" y="409.20" width="9.45" height="1.3" fill="#6a6a6a" fill-opacity="0.72"/><rect x="258.26" y="409.20" width="6.04" height="1.3" fill="#6a6a6a" fill-opacity="0.72"/><rect x="265.17" y="409.20" width="4.73" height="1.3" fill="#6a6a6a" fill-opacity="0.72"/><rect x="270.97" y="409.20" width="9.82" height="1.3" fill="#6a6a6a" fill-opacity="0.72"/><rect x="281.63" y="409.20" width="7.42" height="1.3" fill="#6a6a6a" fill-opacity="0.72"/><rect x="289.90" y="409.20" width="5.10" height="1.3" fill="#6a6a6a" fill-opacity="0.72"/><rect x="168.00" y="412.90" width="3.75" height="1.3" fill="#6a6a6a" fill-opacity="0.72"/><rect x="172.54" y="412.90" width="4.06" height="1.3" fill="#6a6a6a" fill-opacity="0.72"/><rect x="177.75" y="412.90" width="6.23" height="1.3" fill="#6a6a6a" fill-opacity="0.72"/><rect x="184.79" y="412.90" width="9.30" height="1.3" fill="#6a6a6a" fill-opacity="0.72"/><rect x="195.28" y="412.90" width="5.87" height="1.3" fill="#6a6a6a" fill-opacity="0.72"/><rect x="201.93" y="412.90" width="3.94" height="1.3" fill="#6a6a6a" fill-opacity="0.72"/><rect x="206.61" y="412.90" width="5.06" height="1.3" fill="#6a6a6a" fill-opacity="0.72"/><rect x="172.8" y="417.9" width="120" height="3.2" fill="#b89ef6"/><rect x="177.8" y="421.6" width="115.0" height="3.2" fill="#b89ef6"/><rect x="177.8" y="425.3" width="115.0" height="3.2" fill="#b89ef6"/><rect x="177.8" y="429.0" width="118.0" height="3.2" fill="#b89ef6"/><rect x="173.00" y="418.80" width="4.29" height="1.3" fill="#3c2a66" fill-opacity="0.75"/><rect x="178.12" y="418.80" width="6.77" height="1.3" fill="#3c2a66" fill-opacity="0.75"/><rect x="186.04" y="418.80" width="8.12" height="1.3" fill="#3c2a66" fill-opacity="0.75"/><rect x="195.07" y="418.80" width="5.60" height="1.3" fill="#3c2a66" fill-opacity="0.75"/><rect x="201.63" y="418.80" width="5.33" height="1.3" fill="#3c2a66" fill-opacity="0.75"/><rect x="207.83" y="418.80" width="2.97" height="1.3" fill="#3c2a66" fill-opacity="0.75"/><rect x="211.63" y="418.80" width="9.76" height="1.3" fill="#3c2a66" fill-opacity="0.75"/><rect x="222.15" y="418.80" width="6.28" height="1.3" fill="#3c2a66" fill-opacity="0.75"/><rect x="229.44" y="418.80" width="8.97" height="1.3" fill="#3c2a66" fill-opacity="0.75"/><rect x="239.22" y="418.80" width="4.53" height="1.3" fill="#3c2a66" fill-opacity="0.75"/><rect x="244.58" y="418.80" width="5.50" height="1.3" fill="#3c2a66" fill-opacity="0.75"/><rect x="251.00" y="418.80" width="9.65" height="1.3" fill="#3c2a66" fill-opacity="0.75"/><rect x="261.78" y="418.80" width="9.05" height="1.3" fill="#3c2a66" fill-opacity="0.75"/><rect x="271.54" y="418.80" width="2.74" height="1.3" fill="#3c2a66" fill-opacity="0.75"/><rect x="275.33" y="418.80" width="9.22" height="1.3" fill="#3c2a66" fill-opacity="0.75"/><rect x="285.49" y="418.80" width="6.51" height="1.3" fill="#3c2a66" fill-opacity="0.75"/><rect x="178.40" y="422.50" width="5.44" height="1.3" fill="#3c2a66" fill-opacity="0.75"/><rect x="185.00" y="422.50" width="8.69" height="1.3" fill="#3c2a66" fill-opacity="0.75"/><rect x="194.82" y="422.50" width="9.79" height="1.3" fill="#3c2a66" fill-opacity="0.75"/><rect x="205.44" y="422.50" width="3.32" height="1.3" fill="#3c2a66" fill-opacity="0.75"/><rect x="209.53" y="422.50" width="6.42" height="1.3" fill="#3c2a66" fill-opacity="0.75"/><rect x="216.99" y="422.50" width="9.56" height="1.3" fill="#3c2a66" fill-opacity="0.75"/><rect x="227.61" y="422.50" width="7.36" height="1.3" fill="#3c2a66" fill-opacity="0.75"/><rect x="236.05" y="422.50" width="5.93" height="1.3" fill="#3c2a66" fill-opacity="0.75"/><rect x="242.95" y="422.50" width="2.80" height="1.3" fill="#3c2a66" fill-opacity="0.75"/><rect x="246.84" y="422.50" width="4.24" height="1.3" fill="#3c2a66" fill-opacity="0.75"/><rect x="252.25" y="422.50" width="7.34" height="1.3" fill="#3c2a66" fill-opacity="0.75"/><rect x="260.44" y="422.50" width="3.46" height="1.3" fill="#3c2a66" fill-opacity="0.75"/><rect x="264.73" y="422.50" width="7.27" height="1.3" fill="#3c2a66" fill-opacity="0.75"/><rect x="273.05" y="422.50" width="3.34" height="1.3" fill="#3c2a66" fill-opacity="0.75"/><rect x="277.12" y="422.50" width="6.43" height="1.3" fill="#3c2a66" fill-opacity="0.75"/><rect x="284.55" y="422.50" width="5.41" height="1.3" fill="#3c2a66" fill-opacity="0.75"/><rect x="178.40" y="426.20" width="7.01" height="1.3" fill="#3c2a66" fill-opacity="0.75"/><rect x="186.11" y="426.20" width="4.76" height="1.3" fill="#3c2a66" fill-opacity="0.75"/><rect x="191.80" y="426.20" width="9.69" height="1.3" fill="#3c2a66" fill-opacity="0.75"/><rect x="202.52" y="426.20" width="9.13" height="1.3" fill="#3c2a66" fill-opacity="0.75"/><rect x="212.59" y="426.20" width="4.26" height="1.3" fill="#3c2a66" fill-opacity="0.75"/><rect x="217.67" y="426.20" width="9.70" height="1.3" fill="#3c2a66" fill-opacity="0.75"/><rect x="228.43" y="426.20" width="4.81" height="1.3" fill="#3c2a66" fill-opacity="0.75"/><rect x="233.94" y="426.20" width="6.24" height="1.3" fill="#3c2a66" fill-opacity="0.75"/><rect x="241.22" y="426.20" width="5.65" height="1.3" fill="#3c2a66" fill-opacity="0.75"/><rect x="247.70" y="426.20" width="7.51" height="1.3" fill="#3c2a66" fill-opacity="0.75"/><rect x="256.36" y="426.20" width="4.20" height="1.3" fill="#3c2a66" fill-opacity="0.75"/><rect x="261.28" y="426.20" width="5.04" height="1.3" fill="#3c2a66" fill-opacity="0.75"/><rect x="267.23" y="426.20" width="7.62" height="1.3" fill="#3c2a66" fill-opacity="0.75"/><rect x="275.65" y="426.20" width="8.48" height="1.3" fill="#3c2a66" fill-opacity="0.75"/><rect x="285.19" y="426.20" width="6.29" height="1.3" fill="#3c2a66" fill-opacity="0.75"/><rect x="178.40" y="429.90" width="9.77" height="1.3" fill="#3c2a66" fill-opacity="0.75"/><rect x="189.03" y="429.90" width="8.65" height="1.3" fill="#3c2a66" fill-opacity="0.75"/><rect x="198.50" y="429.90" width="4.16" height="1.3" fill="#3c2a66" fill-opacity="0.75"/><rect x="203.74" y="429.90" width="4.71" height="1.3" fill="#3c2a66" fill-opacity="0.75"/><rect x="209.62" y="429.90" width="6.22" height="1.3" fill="#3c2a66" fill-opacity="0.75"/><rect x="216.64" y="429.90" width="4.17" height="1.3" fill="#3c2a66" fill-opacity="0.75"/><rect x="221.72" y="429.90" width="7.49" height="1.3" fill="#3c2a66" fill-opacity="0.75"/><rect x="230.38" y="429.90" width="3.60" height="1.3" fill="#3c2a66" fill-opacity="0.75"/><rect x="234.88" y="429.90" width="4.10" height="1.3" fill="#3c2a66" fill-opacity="0.75"/><rect x="240.16" y="429.90" width="3.56" height="1.3" fill="#3c2a66" fill-opacity="0.75"/><rect x="244.45" y="429.90" width="2.95" height="1.3" fill="#3c2a66" fill-opacity="0.75"/><rect x="248.30" y="429.90" width="9.24" height="1.3" fill="#3c2a66" fill-opacity="0.75"/><rect x="258.68" y="429.90" width="8.00" height="1.3" fill="#3c2a66" fill-opacity="0.75"/><rect x="267.87" y="429.90" width="9.49" height="1.3" fill="#3c2a66" fill-opacity="0.75"/><rect x="278.22" y="429.90" width="3.89" height="1.3" fill="#3c2a66" fill-opacity="0.75"/><rect x="283.28" y="429.90" width="6.44" height="1.3" fill="#3c2a66" fill-opacity="0.75"/><rect x="174" y="434.3" width="1.6" height="1.3" fill="#333"/><rect x="178.40" y="434.30" width="7.48" height="1.3" fill="#6a6a6a" fill-opacity="0.72"/><rect x="186.77" y="434.30" width="5.30" height="1.3" fill="#6a6a6a" fill-opacity="0.72"/><rect x="192.94" y="434.30" width="3.77" height="1.3" fill="#6a6a6a" fill-opacity="0.72"/><rect x="197.41" y="434.30" width="4.60" height="1.3" fill="#6a6a6a" fill-opacity="0.72"/><rect x="202.89" y="434.30" width="9.67" height="1.3" fill="#6a6a6a" fill-opacity="0.72"/><rect x="213.32" y="434.30" width="9.73" height="1.3" fill="#6a6a6a" fill-opacity="0.72"/><rect x="223.85" y="434.30" width="5.17" height="1.3" fill="#6a6a6a" fill-opacity="0.72"/><rect x="230.14" y="434.30" width="8.67" height="1.3" fill="#6a6a6a" fill-opacity="0.72"/><rect x="239.72" y="434.30" width="2.87" height="1.3" fill="#6a6a6a" fill-opacity="0.72"/><rect x="243.52" y="434.30" width="5.30" height="1.3" fill="#6a6a6a" fill-opacity="0.72"/><rect x="249.98" y="434.30" width="3.95" height="1.3" fill="#6a6a6a" fill-opacity="0.72"/><rect x="254.81" y="434.30" width="9.23" height="1.3" fill="#6a6a6a" fill-opacity="0.72"/><rect x="264.75" y="434.30" width="5.58" height="1.3" fill="#6a6a6a" fill-opacity="0.72"/><rect x="271.44" y="434.30" width="8.25" height="1.3" fill="#6a6a6a" fill-opacity="0.72"/><rect x="280.41" y="434.30" width="2.76" height="1.3" fill="#6a6a6a" fill-opacity="0.72"/><rect x="283.90" y="434.30" width="9.10" height="1.3" fill="#6a6a6a" fill-opacity="0.72"/><rect x="178.40" y="438.00" width="8.10" height="1.3" fill="#6a6a6a" fill-opacity="0.72"/><rect x="187.65" y="438.00" width="5.04" height="1.3" fill="#6a6a6a" fill-opacity="0.72"/><rect x="193.53" y="438.00" width="9.68" height="1.3" fill="#6a6a6a" fill-opacity="0.72"/><rect x="204.22" y="438.00" width="4.47" height="1.3" fill="#6a6a6a" fill-opacity="0.72"/><rect x="209.75" y="438.00" width="4.87" height="1.3" fill="#6a6a6a" fill-opacity="0.72"/><rect x="215.46" y="438.00" width="2.53" height="1.3" fill="#6a6a6a" fill-opacity="0.72"/><rect x="219.07" y="438.00" width="9.37" height="1.3" fill="#6a6a6a" fill-opacity="0.72"/><rect x="229.46" y="438.00" width="9.57" height="1.3" fill="#6a6a6a" fill-opacity="0.72"/><rect x="239.74" y="438.00" width="4.25" height="1.3" fill="#6a6a6a" fill-opacity="0.72"/><rect x="244.93" y="438.00" width="9.68" height="1.3" fill="#6a6a6a" fill-opacity="0.72"/><rect x="255.79" y="438.00" width="5.40" height="1.3" fill="#6a6a6a" fill-opacity="0.72"/><rect x="262.01" y="438.00" width="5.72" height="1.3" fill="#6a6a6a" fill-opacity="0.72"/><rect x="268.68" y="438.00" width="9.46" height="1.3" fill="#6a6a6a" fill-opacity="0.72"/><rect x="278.94" y="438.00" width="8.52" height="1.3" fill="#6a6a6a" fill-opacity="0.72"/><rect x="288.52" y="438.00" width="4.48" height="1.3" fill="#6a6a6a" fill-opacity="0.72"/><rect x="178.40" y="441.70" width="7.05" height="1.3" fill="#6a6a6a" fill-opacity="0.72"/><rect x="186.32" y="441.70" width="4.90" height="1.3" fill="#6a6a6a" fill-opacity="0.72"/><rect x="192.10" y="441.70" width="8.37" height="1.3" fill="#6a6a6a" fill-opacity="0.72"/><rect x="201.20" y="441.70" width="3.98" height="1.3" fill="#6a6a6a" fill-opacity="0.72"/><rect x="206.26" y="441.70" width="4.35" height="1.3" fill="#6a6a6a" fill-opacity="0.72"/><rect x="211.35" y="441.70" width="2.75" height="1.3" fill="#6a6a6a" fill-opacity="0.72"/><rect x="215.08" y="441.70" width="4.94" height="1.3" fill="#6a6a6a" fill-opacity="0.72"/><rect x="221.21" y="441.70" width="9.13" height="1.3" fill="#6a6a6a" fill-opacity="0.72"/><rect x="231.53" y="441.70" width="4.49" height="1.3" fill="#6a6a6a" fill-opacity="0.72"/><rect x="236.76" y="441.70" width="3.22" height="1.3" fill="#6a6a6a" fill-opacity="0.72"/><rect x="240.93" y="441.70" width="7.82" height="1.3" fill="#6a6a6a" fill-opacity="0.72"/><rect x="249.68" y="441.70" width="4.26" height="1.3" fill="#6a6a6a" fill-opacity="0.72"/><rect x="254.84" y="441.70" width="7.15" height="1.3" fill="#6a6a6a" fill-opacity="0.72"/><rect x="263.03" y="441.70" width="8.11" height="1.3" fill="#6a6a6a" fill-opacity="0.72"/><rect x="272.26" y="441.70" width="7.48" height="1.3" fill="#6a6a6a" fill-opacity="0.72"/><rect x="280.51" y="441.70" width="8.81" height="1.3" fill="#6a6a6a" fill-opacity="0.72"/><rect x="290.16" y="441.70" width="2.84" height="1.3" fill="#6a6a6a" fill-opacity="0.72"/><rect x="178.40" y="445.40" width="8.04" height="1.3" fill="#6a6a6a" fill-opacity="0.72"/><rect x="187.24" y="445.40" width="4.36" height="1.3" fill="#6a6a6a" fill-opacity="0.72"/><rect x="192.41" y="445.40" width="3.65" height="1.3" fill="#6a6a6a" fill-opacity="0.72"/><rect x="197.21" y="445.40" width="6.84" height="1.3" fill="#6a6a6a" fill-opacity="0.72"/><rect x="204.91" y="445.40" width="5.47" height="1.3" fill="#6a6a6a" fill-opacity="0.72"/><rect x="211.57" y="445.40" width="6.30" height="1.3" fill="#6a6a6a" fill-opacity="0.72"/><rect x="218.69" y="445.40" width="8.56" height="1.3" fill="#6a6a6a" fill-opacity="0.72"/><rect x="228.28" y="445.40" width="9.93" height="1.3" fill="#6a6a6a" fill-opacity="0.72"/><rect x="238.97" y="445.40" width="6.06" height="1.3" fill="#6a6a6a" fill-opacity="0.72"/><rect x="246.14" y="445.40" width="8.80" height="1.3" fill="#6a6a6a" fill-opacity="0.72"/><rect x="256.10" y="445.40" width="2.80" height="1.3" fill="#6a6a6a" fill-opacity="0.72"/><rect x="259.75" y="445.40" width="3.39" height="1.3" fill="#6a6a6a" fill-opacity="0.72"/><rect x="263.94" y="445.40" width="9.80" height="1.3" fill="#6a6a6a" fill-opacity="0.72"/><rect x="274.73" y="445.40" width="9.48" height="1.3" fill="#6a6a6a" fill-opacity="0.72"/><rect x="285.09" y="445.40" width="7.91" height="1.3" fill="#6a6a6a" fill-opacity="0.72"/><rect x="178.40" y="449.10" width="4.45" height="1.3" fill="#6a6a6a" fill-opacity="0.72"/><rect x="183.94" y="449.10" width="9.59" height="1.3" fill="#6a6a6a" fill-opacity="0.72"/><rect x="194.28" y="449.10" width="6.97" height="1.3" fill="#6a6a6a" fill-opacity="0.72"/><rect x="174" y="452.8" width="1.6" height="1.3" fill="#333"/><rect x="178.40" y="452.80" width="4.13" height="1.3" fill="#6a6a6a" fill-opacity="0.72"/><rect x="183.42" y="452.80" width="3.56" height="1.3" fill="#6a6a6a" fill-opacity="0.72"/><rect x="187.78" y="452.80" width="4.41" height="1.3" fill="#6a6a6a" fill-opacity="0.72"/><rect x="193.19" y="452.80" width="7.39" height="1.3" fill="#6a6a6a" fill-opacity="0.72"/><rect x="201.38" y="452.80" width="2.59" height="1.3" fill="#6a6a6a" fill-opacity="0.72"/><rect x="204.83" y="452.80" width="7.59" height="1.3" fill="#6a6a6a" fill-opacity="0.72"/><rect x="213.21" y="452.80" width="4.84" height="1.3" fill="#6a6a6a" fill-opacity="0.72"/><rect x="218.85" y="452.80" width="8.46" height="1.3" fill="#6a6a6a" fill-opacity="0.72"/><rect x="228.29" y="452.80" width="2.97" height="1.3" fill="#6a6a6a" fill-opacity="0.72"/><rect x="232.02" y="452.80" width="5.46" height="1.3" fill="#6a6a6a" fill-opacity="0.72"/><rect x="238.46" y="452.80" width="7.29" height="1.3" fill="#6a6a6a" fill-opacity="0.72"/><rect x="246.49" y="452.80" width="3.73" height="1.3" fill="#6a6a6a" fill-opacity="0.72"/><rect x="251.27" y="452.80" width="5.57" height="1.3" fill="#6a6a6a" fill-opacity="0.72"/><rect x="257.69" y="452.80" width="4.81" height="1.3" fill="#6a6a6a" fill-opacity="0.72"/><rect x="263.67" y="452.80" width="4.84" height="1.3" fill="#6a6a6a" fill-opacity="0.72"/><rect x="269.49" y="452.80" width="5.18" height="1.3" fill="#6a6a6a" fill-opacity="0.72"/><rect x="275.58" y="452.80" width="8.98" height="1.3" fill="#6a6a6a" fill-opacity="0.72"/><rect x="285.76" y="452.80" width="5.23" height="1.3" fill="#6a6a6a" fill-opacity="0.72"/><rect x="178.40" y="456.50" width="7.96" height="1.3" fill="#6a6a6a" fill-opacity="0.72"/><rect x="187.16" y="456.50" width="2.54" height="1.3" fill="#6a6a6a" fill-opacity="0.72"/><rect x="190.86" y="456.50" width="5.68" height="1.3" fill="#6a6a6a" fill-opacity="0.72"/><rect x="197.65" y="456.50" width="5.55" height="1.3" fill="#6a6a6a" fill-opacity="0.72"/><rect x="204.33" y="456.50" width="5.96" height="1.3" fill="#6a6a6a" fill-opacity="0.72"/><rect x="211.07" y="456.50" width="2.61" height="1.3" fill="#6a6a6a" fill-opacity="0.72"/><rect x="214.66" y="456.50" width="7.31" height="1.3" fill="#6a6a6a" fill-opacity="0.72"/><rect x="223.12" y="456.50" width="3.17" height="1.3" fill="#6a6a6a" fill-opacity="0.72"/><rect x="227.30" y="456.50" width="5.28" height="1.3" fill="#6a6a6a" fill-opacity="0.72"/><rect x="233.53" y="456.50" width="3.59" height="1.3" fill="#6a6a6a" fill-opacity="0.72"/><rect x="237.97" y="456.50" width="6.41" height="1.3" fill="#6a6a6a" fill-opacity="0.72"/><rect x="245.54" y="456.50" width="3.32" height="1.3" fill="#6a6a6a" fill-opacity="0.72"/><rect x="249.80" y="456.50" width="8.54" height="1.3" fill="#6a6a6a" fill-opacity="0.72"/><rect x="259.52" y="456.50" width="3.98" height="1.3" fill="#6a6a6a" fill-opacity="0.72"/><rect x="264.26" y="456.50" width="9.57" height="1.3" fill="#6a6a6a" fill-opacity="0.72"/><rect x="275.02" y="456.50" width="6.12" height="1.3" fill="#6a6a6a" fill-opacity="0.72"/><rect x="281.87" y="456.50" width="9.45" height="1.3" fill="#6a6a6a" fill-opacity="0.72"/><rect x="178.40" y="460.20" width="9.28" height="1.3" fill="#6a6a6a" fill-opacity="0.72"/><rect x="188.69" y="460.20" width="8.68" height="1.3" fill="#6a6a6a" fill-opacity="0.72"/><rect x="198.16" y="460.20" width="8.39" height="1.3" fill="#6a6a6a" fill-opacity="0.72"/><rect x="207.36" y="460.20" width="5.53" height="1.3" fill="#6a6a6a" fill-opacity="0.72"/><rect x="214.02" y="460.20" width="8.72" height="1.3" fill="#6a6a6a" fill-opacity="0.72"/><rect x="223.53" y="460.20" width="4.14" height="1.3" fill="#6a6a6a" fill-opacity="0.72"/><rect x="228.56" y="460.20" width="6.38" height="1.3" fill="#6a6a6a" fill-opacity="0.72"/><rect x="235.84" y="460.20" width="3.42" height="1.3" fill="#6a6a6a" fill-opacity="0.72"/><rect x="240.09" y="460.20" width="7.94" height="1.3" fill="#6a6a6a" fill-opacity="0.72"/><rect x="249.17" y="460.20" width="2.81" height="1.3" fill="#6a6a6a" fill-opacity="0.72"/><rect x="252.96" y="460.20" width="8.18" height="1.3" fill="#6a6a6a" fill-opacity="0.72"/><rect x="261.86" y="460.20" width="8.79" height="1.3" fill="#6a6a6a" fill-opacity="0.72"/><rect x="271.41" y="460.20" width="7.00" height="1.3" fill="#6a6a6a" fill-opacity="0.72"/><rect x="279.38" y="460.20" width="7.20" height="1.3" fill="#6a6a6a" fill-opacity="0.72"/><rect x="287.43" y="460.20" width="5.57" height="1.3" fill="#6a6a6a" fill-opacity="0.72"/><rect x="178.40" y="463.90" width="5.69" height="1.3" fill="#6a6a6a" fill-opacity="0.72"/><rect x="185.12" y="463.90" width="5.85" height="1.3" fill="#6a6a6a" fill-opacity="0.72"/><rect x="191.89" y="463.90" width="2.68" height="1.3" fill="#6a6a6a" fill-opacity="0.72"/><rect x="195.58" y="463.90" width="6.17" height="1.3" fill="#6a6a6a" fill-opacity="0.72"/><rect x="202.57" y="463.90" width="8.23" height="1.3" fill="#6a6a6a" fill-opacity="0.72"/><rect x="211.88" y="463.90" width="5.94" height="1.3" fill="#6a6a6a" fill-opacity="0.72"/><rect x="218.61" y="463.90" width="6.05" height="1.3" fill="#6a6a6a" fill-opacity="0.72"/><rect x="225.41" y="463.90" width="3.46" height="1.3" fill="#6a6a6a" fill-opacity="0.72"/><rect x="229.79" y="463.90" width="3.19" height="1.3" fill="#6a6a6a" fill-opacity="0.72"/><rect x="233.90" y="463.90" width="6.33" height="1.3" fill="#6a6a6a" fill-opacity="0.72"/><rect x="240.95" y="463.90" width="7.27" height="1.3" fill="#6a6a6a" fill-opacity="0.72"/><rect x="248.96" y="463.90" width="8.00" height="1.3" fill="#6a6a6a" fill-opacity="0.72"/><rect x="258.05" y="463.90" width="6.34" height="1.3" fill="#6a6a6a" fill-opacity="0.72"/><rect x="265.11" y="463.90" width="6.28" height="1.3" fill="#6a6a6a" fill-opacity="0.72"/><rect x="272.28" y="463.90" width="9.63" height="1.3" fill="#6a6a6a" fill-opacity="0.72"/><rect x="282.68" y="463.90" width="8.93" height="1.3" fill="#6a6a6a" fill-opacity="0.72"/><rect x="178.40" y="467.60" width="7.99" height="1.3" fill="#6a6a6a" fill-opacity="0.72"/><rect x="187.50" y="467.60" width="3.95" height="1.3" fill="#6a6a6a" fill-opacity="0.72"/><rect x="192.64" y="467.60" width="6.19" height="1.3" fill="#6a6a6a" fill-opacity="0.72"/><rect x="200.01" y="467.60" width="9.37" height="1.3" fill="#6a6a6a" fill-opacity="0.72"/><rect x="210.16" y="467.60" width="8.41" height="1.3" fill="#6a6a6a" fill-opacity="0.72"/><rect x="219.74" y="467.60" width="2.99" height="1.3" fill="#6a6a6a" fill-opacity="0.72"/><rect x="223.61" y="467.60" width="6.36" height="1.3" fill="#6a6a6a" fill-opacity="0.72"/><rect x="174" y="471.3" width="1.6" height="1.3" fill="#333"/><rect x="178.40" y="471.30" width="9.22" height="1.3" fill="#6a6a6a" fill-opacity="0.72"/><rect x="188.46" y="471.30" width="8.62" height="1.3" fill="#6a6a6a" fill-opacity="0.72"/><rect x="197.85" y="471.30" width="6.27" height="1.3" fill="#6a6a6a" fill-opacity="0.72"/><rect x="205.28" y="471.30" width="4.06" height="1.3" fill="#6a6a6a" fill-opacity="0.72"/><rect x="210.17" y="471.30" width="6.30" height="1.3" fill="#6a6a6a" fill-opacity="0.72"/><rect x="217.33" y="471.30" width="2.78" height="1.3" fill="#6a6a6a" fill-opacity="0.72"/><rect x="220.89" y="471.30" width="3.71" height="1.3" fill="#6a6a6a" fill-opacity="0.72"/><rect x="225.77" y="471.30" width="7.60" height="1.3" fill="#6a6a6a" fill-opacity="0.72"/><rect x="234.52" y="471.30" width="3.77" height="1.3" fill="#6a6a6a" fill-opacity="0.72"/><rect x="239.37" y="471.30" width="3.36" height="1.3" fill="#6a6a6a" fill-opacity="0.72"/><rect x="243.70" y="471.30" width="7.27" height="1.3" fill="#6a6a6a" fill-opacity="0.72"/><rect x="251.85" y="471.30" width="9.05" height="1.3" fill="#6a6a6a" fill-opacity="0.72"/><rect x="261.88" y="471.30" width="6.85" height="1.3" fill="#6a6a6a" fill-opacity="0.72"/><rect x="269.87" y="471.30" width="3.28" height="1.3" fill="#6a6a6a" fill-opacity="0.72"/><rect x="274.35" y="471.30" width="7.22" height="1.3" fill="#6a6a6a" fill-opacity="0.72"/><rect x="282.47" y="471.30" width="8.48" height="1.3" fill="#6a6a6a" fill-opacity="0.72"/><rect x="178.40" y="475.00" width="9.93" height="1.3" fill="#6a6a6a" fill-opacity="0.72"/><rect x="189.32" y="475.00" width="5.20" height="1.3" fill="#6a6a6a" fill-opacity="0.72"/><rect x="195.60" y="475.00" width="5.82" height="1.3" fill="#6a6a6a" fill-opacity="0.72"/><rect x="202.21" y="475.00" width="8.08" height="1.3" fill="#6a6a6a" fill-opacity="0.72"/><rect x="211.01" y="475.00" width="8.65" height="1.3" fill="#6a6a6a" fill-opacity="0.72"/><rect x="220.48" y="475.00" width="7.29" height="1.3" fill="#6a6a6a" fill-opacity="0.72"/><rect x="228.97" y="475.00" width="6.89" height="1.3" fill="#6a6a6a" fill-opacity="0.72"/><rect x="236.90" y="475.00" width="4.84" height="1.3" fill="#6a6a6a" fill-opacity="0.72"/><rect x="242.44" y="475.00" width="2.75" height="1.3" fill="#6a6a6a" fill-opacity="0.72"/><rect x="245.97" y="475.00" width="7.12" height="1.3" fill="#6a6a6a" fill-opacity="0.72"/><rect x="254.01" y="475.00" width="6.35" height="1.3" fill="#6a6a6a" fill-opacity="0.72"/><rect x="261.50" y="475.00" width="3.49" height="1.3" fill="#6a6a6a" fill-opacity="0.72"/><rect x="265.80" y="475.00" width="7.40" height="1.3" fill="#6a6a6a" fill-opacity="0.72"/><rect x="273.91" y="475.00" width="2.52" height="1.3" fill="#6a6a6a" fill-opacity="0.72"/><rect x="277.31" y="475.00" width="3.30" height="1.3" fill="#6a6a6a" fill-opacity="0.72"/><rect x="281.49" y="475.00" width="4.18" height="1.3" fill="#6a6a6a" fill-opacity="0.72"/><rect x="286.66" y="475.00" width="6.34" height="1.3" fill="#6a6a6a" fill-opacity="0.72"/><rect x="178.40" y="478.70" width="7.18" height="1.3" fill="#6a6a6a" fill-opacity="0.72"/><rect x="186.52" y="478.70" width="3.51" height="1.3" fill="#6a6a6a" fill-opacity="0.72"/><rect x="191.20" y="478.70" width="4.33" height="1.3" fill="#6a6a6a" fill-opacity="0.72"/><rect x="196.30" y="478.70" width="3.22" height="1.3" fill="#6a6a6a" fill-opacity="0.72"/><rect x="200.54" y="478.70" width="6.51" height="1.3" fill="#6a6a6a" fill-opacity="0.72"/><rect x="168.00" y="484.80" width="5.51" height="1.3" fill="#6a6a6a" fill-opacity="0.72"/><rect x="174.35" y="484.80" width="2.59" height="1.3" fill="#6a6a6a" fill-opacity="0.72"/><rect x="177.96" y="484.80" width="6.72" height="1.3" fill="#6a6a6a" fill-opacity="0.72"/><rect x="185.55" y="484.80" width="7.34" height="1.3" fill="#6a6a6a" fill-opacity="0.72"/><rect x="193.81" y="484.80" width="9.53" height="1.3" fill="#6a6a6a" fill-opacity="0.72"/><rect x="204.41" y="484.80" width="4.36" height="1.3" fill="#6a6a6a" fill-opacity="0.72"/><rect x="209.92" y="484.80" width="2.83" height="1.3" fill="#6a6a6a" fill-opacity="0.72"/><rect x="213.72" y="484.80" width="5.54" height="1.3" fill="#6a6a6a" fill-opacity="0.72"/><rect x="220.08" y="484.80" width="2.94" height="1.3" fill="#6a6a6a" fill-opacity="0.72"/><rect x="224.11" y="484.80" width="2.59" height="1.3" fill="#6a6a6a" fill-opacity="0.72"/><rect x="227.68" y="484.80" width="9.56" height="1.3" fill="#6a6a6a" fill-opacity="0.72"/><rect x="238.01" y="484.80" width="4.00" height="1.3" fill="#6a6a6a" fill-opacity="0.72"/><rect x="243.01" y="484.80" width="6.30" height="1.3" fill="#6a6a6a" fill-opacity="0.72"/><rect x="250.33" y="484.80" width="8.60" height="1.3" fill="#6a6a6a" fill-opacity="0.72"/><rect x="259.72" y="484.80" width="4.82" height="1.3" fill="#6a6a6a" fill-opacity="0.72"/><rect x="265.39" y="484.80" width="2.86" height="1.3" fill="#6a6a6a" fill-opacity="0.72"/><rect x="269.40" y="484.80" width="8.37" height="1.3" fill="#6a6a6a" fill-opacity="0.72"/><rect x="278.83" y="484.80" width="2.55" height="1.3" fill="#6a6a6a" fill-opacity="0.72"/><rect x="282.50" y="484.80" width="8.09" height="1.3" fill="#6a6a6a" fill-opacity="0.72"/><rect x="291.52" y="484.80" width="3.48" height="1.3" fill="#6a6a6a" fill-opacity="0.72"/><rect x="168.00" y="488.50" width="4.19" height="1.3" fill="#6a6a6a" fill-opacity="0.72"/><rect x="172.95" y="488.50" width="4.24" height="1.3" fill="#6a6a6a" fill-opacity="0.72"/><rect x="177.91" y="488.50" width="5.02" height="1.3" fill="#6a6a6a" fill-opacity="0.72"/><rect x="184.00" y="488.50" width="7.71" height="1.3" fill="#6a6a6a" fill-opacity="0.72"/><rect x="192.84" y="488.50" width="7.84" height="1.3" fill="#6a6a6a" fill-opacity="0.72"/><rect x="201.51" y="488.50" width="6.65" height="1.3" fill="#6a6a6a" fill-opacity="0.72"/><rect x="209.08" y="488.50" width="8.41" height="1.3" fill="#6a6a6a" fill-opacity="0.72"/><rect x="218.45" y="488.50" width="4.49" height="1.3" fill="#6a6a6a" fill-opacity="0.72"/><rect x="223.96" y="488.50" width="9.74" height="1.3" fill="#6a6a6a" fill-opacity="0.72"/><rect x="234.51" y="488.50" width="9.10" height="1.3" fill="#6a6a6a" fill-opacity="0.72"/><rect x="244.32" y="488.50" width="4.45" height="1.3" fill="#6a6a6a" fill-opacity="0.72"/><rect x="249.59" y="488.50" width="8.08" height="1.3" fill="#6a6a6a" fill-opacity="0.72"/><rect x="258.84" y="488.50" width="8.10" height="1.3" fill="#6a6a6a" fill-opacity="0.72"/><rect x="267.80" y="488.50" width="9.10" height="1.3" fill="#6a6a6a" fill-opacity="0.72"/><rect x="277.77" y="488.50" width="4.29" height="1.3" fill="#6a6a6a" fill-opacity="0.72"/><rect x="283.21" y="488.50" width="7.23" height="1.3" fill="#6a6a6a" fill-opacity="0.72"/><rect x="291.49" y="488.50" width="3.51" height="1.3" fill="#6a6a6a" fill-opacity="0.72"/><rect x="168.00" y="492.20" width="6.02" height="1.3" fill="#6a6a6a" fill-opacity="0.72"/><rect x="175.14" y="492.20" width="7.73" height="1.3" fill="#6a6a6a" fill-opacity="0.72"/><rect x="184.00" y="492.20" width="5.78" height="1.3" fill="#6a6a6a" fill-opacity="0.72"/><rect x="190.84" y="492.20" width="6.78" height="1.3" fill="#6a6a6a" fill-opacity="0.72"/><rect x="198.47" y="492.20" width="4.09" height="1.3" fill="#6a6a6a" fill-opacity="0.72"/><rect x="203.58" y="492.20" width="3.08" height="1.3" fill="#6a6a6a" fill-opacity="0.72"/><rect x="207.81" y="492.20" width="3.58" height="1.3" fill="#6a6a6a" fill-opacity="0.72"/><rect x="212.11" y="492.20" width="3.30" height="1.3" fill="#6a6a6a" fill-opacity="0.72"/><rect x="216.58" y="492.20" width="5.09" height="1.3" fill="#6a6a6a" fill-opacity="0.72"/><rect x="222.43" y="492.20" width="2.72" height="1.3" fill="#6a6a6a" fill-opacity="0.72"/><rect x="225.87" y="492.20" width="7.69" height="1.3" fill="#6a6a6a" fill-opacity="0.72"/><rect x="234.58" y="492.20" width="7.73" height="1.3" fill="#6a6a6a" fill-opacity="0.72"/><rect x="243.38" y="492.20" width="2.99" height="1.3" fill="#6a6a6a" fill-opacity="0.72"/><rect x="247.37" y="492.20" width="5.23" height="1.3" fill="#6a6a6a" fill-opacity="0.72"/><rect x="253.70" y="492.20" width="8.65" height="1.3" fill="#6a6a6a" fill-opacity="0.72"/><rect x="263.49" y="492.20" width="2.99" height="1.3" fill="#6a6a6a" fill-opacity="0.72"/><rect x="267.62" y="492.20" width="9.36" height="1.3" fill="#6a6a6a" fill-opacity="0.72"/><rect x="278.15" y="492.20" width="3.30" height="1.3" fill="#6a6a6a" fill-opacity="0.72"/><rect x="282.26" y="492.20" width="3.34" height="1.3" fill="#6a6a6a" fill-opacity="0.72"/><rect x="286.32" y="492.20" width="8.68" height="1.3" fill="#6a6a6a" fill-opacity="0.72"/><rect x="168.00" y="495.90" width="7.26" height="1.3" fill="#6a6a6a" fill-opacity="0.72"/><rect x="176.37" y="495.90" width="7.24" height="1.3" fill="#6a6a6a" fill-opacity="0.72"/><rect x="184.45" y="495.90" width="3.25" height="1.3" fill="#6a6a6a" fill-opacity="0.72"/><rect x="188.45" y="495.90" width="8.18" height="1.3" fill="#6a6a6a" fill-opacity="0.72"/><rect x="197.43" y="495.90" width="4.89" height="1.3" fill="#6a6a6a" fill-opacity="0.72"/><rect x="203.24" y="495.90" width="2.66" height="1.3" fill="#6a6a6a" fill-opacity="0.72"/><rect x="206.72" y="495.90" width="4.62" height="1.3" fill="#6a6a6a" fill-opacity="0.72"/><rect x="212.40" y="495.90" width="5.26" height="1.3" fill="#6a6a6a" fill-opacity="0.72"/><rect x="218.52" y="495.90" width="9.73" height="1.3" fill="#6a6a6a" fill-opacity="0.72"/><rect x="229.20" y="495.90" width="8.89" height="1.3" fill="#6a6a6a" fill-opacity="0.72"/><rect x="239.09" y="495.90" width="2.73" height="1.3" fill="#6a6a6a" fill-opacity="0.72"/><rect x="242.73" y="495.90" width="5.77" height="1.3" fill="#6a6a6a" fill-opacity="0.72"/><rect x="249.59" y="495.90" width="5.10" height="1.3" fill="#6a6a6a" fill-opacity="0.72"/><rect x="255.75" y="495.90" width="6.53" height="1.3" fill="#6a6a6a" fill-opacity="0.72"/><rect x="263.09" y="495.90" width="8.97" height="1.3" fill="#6a6a6a" fill-opacity="0.72"/><rect x="272.80" y="495.90" width="8.65" height="1.3" fill="#6a6a6a" fill-opacity="0.72"/><rect x="282.23" y="495.90" width="2.51" height="1.3" fill="#6a6a6a" fill-opacity="0.72"/><rect x="285.55" y="495.90" width="8.22" height="1.3" fill="#6a6a6a" fill-opacity="0.72"/><rect x="168.00" y="499.60" width="2.53" height="1.3" fill="#6a6a6a" fill-opacity="0.72"/><rect x="171.48" y="499.60" width="6.19" height="1.3" fill="#6a6a6a" fill-opacity="0.72"/><rect x="178.76" y="499.60" width="3.88" height="1.3" fill="#6a6a6a" fill-opacity="0.72"/><rect x="183.59" y="499.60" width="5.10" height="1.3" fill="#6a6a6a" fill-opacity="0.72"/><rect x="189.81" y="499.60" width="3.59" height="1.3" fill="#6a6a6a" fill-opacity="0.72"/><rect x="168" y="515.8" width="127" height="1" fill="#8fb0d8"/><rect x="168.00" y="518.80" width="4.63" height="0.9" fill="#999" fill-opacity="0.72"/><rect x="173.44" y="518.80" width="7.75" height="0.9" fill="#999" fill-opacity="0.72"/><rect x="182.13" y="518.80" width="3.32" height="0.9" fill="#999" fill-opacity="0.72"/><rect x="186.47" y="518.80" width="3.11" height="0.9" fill="#999" fill-opacity="0.72"/></svg>
<div class="t" style="left:-68.5px;width:600px;text-align:center;top:547.15px;font-size:14px;line-height:14px;color:#1a66cc;font-weight:bold;">6</div>
<div class="a" style="left:157px;top:609px;width:150px;height:160px;background:#fff;border-radius:5px;box-shadow:0 0 0 0.6px rgba(0,0,0,.07)"></div>
<div class="a" style="left:167px;top:619px;width:130px;height:8px;background:#6896c8"></div>
<svg class="a" style="left:0px;top:0px" width="1208" height="831" viewBox="0 0 1208 831"><text x="169" y="625.6" font-family="Liberation Sans" font-size="6" fill="#eef3fa">CHAPTER 1</text><text x="169" y="634.8" font-family="Liberation Serif" font-size="5.6" fill="#333">Daily Weekday Travel in Oregon</text><rect x="169.00" y="640.30" width="7.73" height="1.3" fill="#6a6a6a" fill-opacity="0.72"/><rect x="177.82" y="640.30" width="7.21" height="1.3" fill="#6a6a6a" fill-opacity="0.72"/><rect x="185.91" y="640.30" width="5.51" height="1.3" fill="#6a6a6a" fill-opacity="0.72"/><rect x="192.32" y="640.30" width="9.18" height="1.3" fill="#6a6a6a" fill-opacity="0.72"/><rect x="202.24" y="640.30" width="9.16" height="1.3" fill="#6a6a6a" fill-opacity="0.72"/><rect x="212.11" y="640.30" width="4.05" height="1.3" fill="#6a6a6a" fill-opacity="0.72"/><rect x="216.99" y="640.30" width="9.26" height="1.3" fill="#6a6a6a" fill-opacity="0.72"/><rect x="227.20" y="640.30" width="5.34" height="1.3" fill="#6a6a6a" fill-opacity="0.72"/><rect x="233.69" y="640.30" width="4.25" height="1.3" fill="#6a6a6a" fill-opacity="0.72"/><rect x="238.87" y="640.30" width="6.49" height="1.3" fill="#6a6a6a" fill-opacity="0.72"/><rect x="246.43" y="640.30" width="8.15" height="1.3" fill="#6a6a6a" fill-opacity="0.72"/><rect x="255.60" y="640.30" width="5.11" height="1.3" fill="#6a6a6a" fill-opacity="0.72"/><rect x="261.58" y="640.30" width="3.66" height="1.3" fill="#6a6a6a" fill-opacity="0.72"/><rect x="266.37" y="640.30" width="7.47" height="1.3" fill="#6a6a6a" fill-opacity="0.72"/><rect x="274.90" y="640.30" width="3.77" height="1.3" fill="#6a6a6a" fill-opacity="0.72"/><rect x="279.60" y="640.30" width="8.30" height="1.3" fill="#6a6a6a" fill-opacity="0.72"/><rect x="288.89" y="640.30" width="3.45" height="1.3" fill="#6a6a6a" fill-opacity="0.72"/><rect x="169.00" y="643.95" width="9.14" height="1.3" fill="#6a6a6a" fill-opacity="0.72"/><rect x="178.96" y="643.95" width="3.94" height="1.3" fill="#6a6a6a" fill-opacity="0.72"/><rect x="183.74" y="643.95" width="7.77" height="1.3" fill="#6a6a6a" fill-opacity="0.72"/><rect x="192.64" y="643.95" width="3.66" height="1.3" fill="#6a6a6a" fill-opacity="0.72"/><rect x="197.08" y="643.95" width="4.36" height="1.3" fill="#6a6a6a" fill-opacity="0.72"/><rect x="202.30" y="643.95" width="6.42" height="1.3" fill="#6a6a6a" fill-opacity="0.72"/><rect x="209.49" y="643.95" width="4.96" height="1.3" fill="#6a6a6a" fill-opacity="0.72"/><rect x="215.25" y="643.95" width="9.81" height="1.3" fill="#6a6a6a" fill-opacity="0.72"/><rect x="226.13" y="643.95" width="3.26" height="1.3" fill="#6a6a6a" fill-opacity="0.72"/><rect x="230.57" y="643.95" width="3.26" height="1.3" fill="#6a6a6a" fill-opacity="0.72"/><rect x="234.73" y="643.95" width="9.88" height="1.3" fill="#6a6a6a" fill-opacity="0.72"/><rect x="245.70" y="643.95" width="8.00" height="1.3" fill="#6a6a6a" fill-opacity="0.72"/><rect x="254.62" y="643.95" width="3.97" height="1.3" fill="#6a6a6a" fill-opacity="0.72"/><rect x="259.61" y="643.95" width="3.30" height="1.3" fill="#6a6a6a" fill-opacity="0.72"/><rect x="263.72" y="643.95" width="5.41" height="1.3" fill="#6a6a6a" fill-opacity="0.72"/><rect x="269.85" y="643.95" width="5.49" height="1.3" fill="#6a6a6a" fill-opacity="0.72"/><rect x="276.43" y="643.95" width="7.70" height="1.3" fill="#6a6a6a" fill-opacity="0.72"/><rect x="285.08" y="643.95" width="7.24" height="1.3" fill="#6a6a6a" fill-opacity="0.72"/><rect x="169.00" y="647.60" width="3.56" height="1.3" fill="#6a6a6a" fill-opacity="0.72"/><rect x="173.57" y="647.60" width="5.54" height="1.3" fill="#6a6a6a" fill-opacity="0.72"/><rect x="180.17" y="647.60" width="9.31" height="1.3" fill="#6a6a6a" fill-opacity="0.72"/><rect x="190.40" y="647.60" width="6.80" height="1.3" fill="#6a6a6a" fill-opacity="0.72"/><rect x="198.28" y="647.60" width="5.66" height="1.3" fill="#6a6a6a" fill-opacity="0.72"/><rect x="204.75" y="647.60" width="7.92" height="1.3" fill="#6a6a6a" fill-opacity="0.72"/><rect x="213.81" y="647.60" width="8.31" height="1.3" fill="#6a6a6a" fill-opacity="0.72"/><rect x="223.16" y="647.60" width="8.89" height="1.3" fill="#6a6a6a" fill-opacity="0.72"/><rect x="233.09" y="647.60" width="7.31" height="1.3" fill="#6a6a6a" fill-opacity="0.72"/><rect x="241.33" y="647.60" width="4.85" height="1.3" fill="#6a6a6a" fill-opacity="0.72"/><rect x="247.19" y="647.60" width="3.23" height="1.3" fill="#6a6a6a" fill-opacity="0.72"/><rect x="251.34" y="647.60" width="8.37" height="1.3" fill="#6a6a6a" fill-opacity="0.72"/><rect x="260.76" y="647.60" width="7.22" height="1.3" fill="#6a6a6a" fill-opacity="0.72"/><rect x="268.81" y="647.60" width="5.68" height="1.3" fill="#6a6a6a" fill-opacity="0.72"/><rect x="275.41" y="647.60" width="7.16" height="1.3" fill="#6a6a6a" fill-opacity="0.72"/><rect x="283.48" y="647.60" width="7.56" height="1.3" fill="#6a6a6a" fill-opacity="0.72"/><rect x="292.21" y="647.60" width="2.79" height="1.3" fill="#6a6a6a" fill-opacity="0.72"/><rect x="169.00" y="651.25" width="8.34" height="1.3" fill="#6a6a6a" fill-opacity="0.72"/><rect x="178.23" y="651.25" width="6.17" height="1.3" fill="#6a6a6a" fill-opacity="0.72"/><rect x="185.59" y="651.25" width="2.79" height="1.3" fill="#6a6a6a" fill-opacity="0.72"/><rect x="189.35" y="651.25" width="3.71" height="1.3" fill="#6a6a6a" fill-opacity="0.72"/><rect x="194.15" y="651.25" width="9.55" height="1.3" fill="#6a6a6a" fill-opacity="0.72"/><rect x="204.66" y="651.25" width="3.26" height="1.3" fill="#6a6a6a" fill-opacity="0.72"/><rect x="208.91" y="651.25" width="6.56" height="1.3" fill="#6a6a6a" fill-opacity="0.72"/><rect x="216.52" y="651.25" width="6.34" height="1.3" fill="#6a6a6a" fill-opacity="0.72"/><rect x="223.88" y="651.25" width="8.72" height="1.3" fill="#6a6a6a" fill-opacity="0.72"/><rect x="233.56" y="651.25" width="5.58" height="1.3" fill="#6a6a6a" fill-opacity="0.72"/><rect x="240.31" y="651.25" width="4.08" height="1.3" fill="#6a6a6a" fill-opacity="0.72"/><rect x="245.43" y="651.25" width="5.44" height="1.3" fill="#6a6a6a" fill-opacity="0.72"/><rect x="251.96" y="651.25" width="3.42" height="1.3" fill="#6a6a6a" fill-opacity="0.72"/><rect x="256.57" y="651.25" width="5.17" height="1.3" fill="#6a6a6a" fill-opacity="0.72"/><rect x="262.46" y="651.25" width="4.56" height="1.3" fill="#6a6a6a" fill-opacity="0.72"/><rect x="267.92" y="651.25" width="2.60" height="1.3" fill="#6a6a6a" fill-opacity="0.72"/><rect x="271.43" y="651.25" width="5.65" height="1.3" fill="#6a6a6a" fill-opacity="0.72"/><rect x="278.13" y="651.25" width="5.14" height="1.3" fill="#6a6a6a" fill-opacity="0.72"/><rect x="284.10" y="651.25" width="4.18" height="1.3" fill="#6a6a6a" fill-opacity="0.72"/><rect x="289.36" y="651.25" width="5.64" height="1.3" fill="#6a6a6a" fill-opacity="0.72"/><rect x="169.00" y="654.90" width="4.14" height="1.3" fill="#6a6a6a" fill-opacity="0.72"/><rect x="174.24" y="654.90" width="5.44" height="1.3" fill="#6a6a6a" fill-opacity="0.72"/><rect x="180.49" y="654.90" width="3.47" height="1.3" fill="#6a6a6a" fill-opacity="0.72"/><rect x="185.05" y="654.90" width="8.57" height="1.3" fill="#6a6a6a" fill-opacity="0.72"/><rect x="194.64" y="654.90" width="6.02" height="1.3" fill="#6a6a6a" fill-opacity="0.72"/><rect x="201.64" y="654.90" width="4.19" height="1.3" fill="#6a6a6a" fill-opacity="0.72"/><rect x="207.01" y="654.90" width="5.15" height="1.3" fill="#6a6a6a" fill-opacity="0.72"/><rect x="213.18" y="654.90" width="8.64" height="1.3" fill="#6a6a6a" fill-opacity="0.72"/><rect x="222.93" y="654.90" width="6.01" height="1.3" fill="#6a6a6a" fill-opacity="0.72"/><rect x="229.79" y="654.90" width="6.61" height="1.3" fill="#6a6a6a" fill-opacity="0.72"/><rect x="237.16" y="654.90" width="8.75" height="1.3" fill="#6a6a6a" fill-opacity="0.72"/><rect x="246.79" y="654.90" width="8.88" height="1.3" fill="#6a6a6a" fill-opacity="0.72"/><rect x="256.51" y="654.90" width="5.32" height="1.3" fill="#6a6a6a" fill-opacity="0.72"/><rect x="262.65" y="654.90" width="5.70" height="1.3" fill="#6a6a6a" fill-opacity="0.72"/><rect x="269.14" y="654.90" width="2.52" height="1.3" fill="#6a6a6a" fill-opacity="0.72"/><rect x="272.72" y="654.90" width="4.61" height="1.3" fill="#6a6a6a" fill-opacity="0.72"/><rect x="278.15" y="654.90" width="4.76" height="1.3" fill="#6a6a6a" fill-opacity="0.72"/><rect x="283.86" y="654.90" width="5.71" height="1.3" fill="#6a6a6a" fill-opacity="0.72"/><rect x="290.59" y="654.90" width="4.41" height="1.3" fill="#6a6a6a" fill-opacity="0.72"/><rect x="169.00" y="658.55" width="9.47" height="1.3" fill="#6a6a6a" fill-opacity="0.72"/><rect x="179.59" y="658.55" width="2.93" height="1.3" fill="#6a6a6a" fill-opacity="0.72"/><rect x="183.63" y="658.55" width="9.29" height="1.3" fill="#6a6a6a" fill-opacity="0.72"/><rect x="194.02" y="658.55" width="3.55" height="1.3" fill="#6a6a6a" fill-opacity="0.72"/><rect x="198.69" y="658.55" width="7.25" height="1.3" fill="#6a6a6a" fill-opacity="0.72"/><rect x="206.65" y="658.55" width="2.59" height="1.3" fill="#6a6a6a" fill-opacity="0.72"/><rect x="210.41" y="658.55" width="7.42" height="1.3" fill="#6a6a6a" fill-opacity="0.72"/><rect x="218.65" y="658.55" width="3.26" height="1.3" fill="#6a6a6a" fill-opacity="0.72"/><rect x="222.68" y="658.55" width="4.25" height="1.3" fill="#6a6a6a" fill-opacity="0.72"/><rect x="228.02" y="658.55" width="5.10" height="1.3" fill="#6a6a6a" fill-opacity="0.72"/><rect x="233.90" y="658.55" width="9.28" height="1.3" fill="#6a6a6a" fill-opacity="0.72"/><rect x="244.28" y="658.55" width="3.76" height="1.3" fill="#6a6a6a" fill-opacity="0.72"/><rect x="249.18" y="658.55" width="7.06" height="1.3" fill="#6a6a6a" fill-opacity="0.72"/><rect x="257.33" y="658.55" width="7.51" height="1.3" fill="#6a6a6a" fill-opacity="0.72"/><rect x="265.99" y="658.55" width="8.41" height="1.3" fill="#6a6a6a" fill-opacity="0.72"/><rect x="275.52" y="658.55" width="3.98" height="1.3" fill="#6a6a6a" fill-opacity="0.72"/><rect x="280.55" y="658.55" width="6.48" height="1.3" fill="#6a6a6a" fill-opacity="0.72"/><rect x="288.10" y="658.55" width="5.79" height="1.3" fill="#6a6a6a" fill-opacity="0.72"/><rect x="169.00" y="662.20" width="6.66" height="1.3" fill="#6a6a6a" fill-opacity="0.72"/><rect x="176.50" y="662.20" width="4.26" height="1.3" fill="#6a6a6a" fill-opacity="0.72"/><rect x="181.52" y="662.20" width="6.20" height="1.3" fill="#6a6a6a" fill-opacity="0.72"/><rect x="188.45" y="662.20" width="6.00" height="1.3" fill="#6a6a6a" fill-opacity="0.72"/><rect x="195.22" y="662.20" width="6.19" height="1.3" fill="#6a6a6a" fill-opacity="0.72"/><rect x="202.36" y="662.20" width="6.55" height="1.3" fill="#6a6a6a" fill-opacity="0.72"/><rect x="210.04" y="662.20" width="2.55" height="1.3" fill="#6a6a6a" fill-opacity="0.72"/><rect x="213.71" y="662.20" width="6.01" height="1.3" fill="#6a6a6a" fill-opacity="0.72"/><rect x="220.70" y="662.20" width="7.49" height="1.3" fill="#6a6a6a" fill-opacity="0.72"/><rect x="229.31" y="662.20" width="5.31" height="1.3" fill="#6a6a6a" fill-opacity="0.72"/><rect x="235.53" y="662.20" width="9.70" height="1.3" fill="#6a6a6a" fill-opacity="0.72"/><rect x="245.97" y="662.20" width="7.28" height="1.3" fill="#6a6a6a" fill-opacity="0.72"/><rect x="254.27" y="662.20" width="2.71" height="1.3" fill="#6a6a6a" fill-opacity="0.72"/><rect x="257.99" y="662.20" width="7.62" height="1.3" fill="#6a6a6a" fill-opacity="0.72"/><rect x="266.77" y="662.20" width="4.98" height="1.3" fill="#6a6a6a" fill-opacity="0.72"/><rect x="272.94" y="662.20" width="6.33" height="1.3" fill="#6a6a6a" fill-opacity="0.72"/><rect x="280.21" y="662.20" width="9.23" height="1.3" fill="#6a6a6a" fill-opacity="0.72"/><rect x="290.16" y="662.20" width="4.84" height="1.3" fill="#6a6a6a" fill-opacity="0.72"/><rect x="169.00" y="665.85" width="5.04" height="1.3" fill="#6a6a6a" fill-opacity="0.72"/><rect x="175.17" y="665.85" width="3.91" height="1.3" fill="#6a6a6a" fill-opacity="0.72"/><rect x="169.00" y="673.80" width="6.44" height="1.3" fill="#6a93cc" fill-opacity="0.9"/><rect x="176.53" y="673.80" width="4.08" height="1.3" fill="#6a93cc" fill-opacity="0.9"/><rect x="181.52" y="673.80" width="5.67" height="1.3" fill="#6a93cc" fill-opacity="0.9"/><rect x="188.17" y="673.80" width="8.70" height="1.3" fill="#6a93cc" fill-opacity="0.9"/><rect x="169.00" y="677.80" width="8.71" height="1.3" fill="#6a6a6a" fill-opacity="0.72"/><rect x="178.61" y="677.80" width="6.28" height="1.3" fill="#6a6a6a" fill-opacity="0.72"/><rect x="185.72" y="677.80" width="6.30" height="1.3" fill="#6a6a6a" fill-opacity="0.72"/><rect x="193.21" y="677.80" width="7.41" height="1.3" fill="#6a6a6a" fill-opacity="0.72"/><rect x="201.71" y="677.80" width="4.98" height="1.3" fill="#6a6a6a" fill-opacity="0.72"/><rect x="207.55" y="677.80" width="4.74" height="1.3" fill="#6a6a6a" fill-opacity="0.72"/><rect x="213.29" y="677.80" width="7.26" height="1.3" fill="#6a6a6a" fill-opacity="0.72"/><rect x="221.65" y="677.80" width="2.80" height="1.3" fill="#6a6a6a" fill-opacity="0.72"/><rect x="225.51" y="677.80" width="9.14" height="1.3" fill="#6a6a6a" fill-opacity="0.72"/><rect x="235.62" y="677.80" width="2.87" height="1.3" fill="#6a6a6a" fill-opacity="0.72"/><rect x="239.34" y="677.80" width="2.55" height="1.3" fill="#6a6a6a" fill-opacity="0.72"/><rect x="242.69" y="677.80" width="9.41" height="1.3" fill="#6a6a6a" fill-opacity="0.72"/><rect x="253.10" y="677.80" width="7.44" height="1.3" fill="#6a6a6a" fill-opacity="0.72"/><rect x="261.63" y="677.80" width="9.32" height="1.3" fill="#6a6a6a" fill-opacity="0.72"/><rect x="271.96" y="677.80" width="7.13" height="1.3" fill="#6a6a6a" fill-opacity="0.72"/><rect x="280.10" y="677.80" width="7.72" height="1.3" fill="#6a6a6a" fill-opacity="0.72"/><rect x="288.82" y="677.80" width="6.18" height="1.3" fill="#6a6a6a" fill-opacity="0.72"/><rect x="169.00" y="681.45" width="7.50" height="1.3" fill="#6a6a6a" fill-opacity="0.72"/><rect x="177.43" y="681.45" width="8.22" height="1.3" fill="#6a6a6a" fill-opacity="0.72"/><rect x="186.40" y="681.45" width="3.86" height="1.3" fill="#6a6a6a" fill-opacity="0.72"/><rect x="190.98" y="681.45" width="8.31" height="1.3" fill="#6a6a6a" fill-opacity="0.72"/><rect x="200.45" y="681.45" width="7.42" height="1.3" fill="#6a6a6a" fill-opacity="0.72"/><rect x="208.75" y="681.45" width="8.67" height="1.3" fill="#6a6a6a" fill-opacity="0.72"/><rect x="218.51" y="681.45" width="6.72" height="1.3" fill="#6a6a6a" fill-opacity="0.72"/><rect x="226.06" y="681.45" width="4.77" height="1.3" fill="#6a6a6a" fill-opacity="0.72"/><rect x="231.73" y="681.45" width="4.89" height="1.3" fill="#6a6a6a" fill-opacity="0.72"/><rect x="237.54" y="681.45" width="7.31" height="1.3" fill="#6a6a6a" fill-opacity="0.72"/><rect x="246.02" y="681.45" width="2.91" height="1.3" fill="#6a6a6a" fill-opacity="0.72"/><rect x="249.91" y="681.45" width="2.80" height="1.3" fill="#6a6a6a" fill-opacity="0.72"/><rect x="253.46" y="681.45" width="8.58" height="1.3" fill="#6a6a6a" fill-opacity="0.72"/><rect x="263.03" y="681.45" width="9.39" height="1.3" fill="#6a6a6a" fill-opacity="0.72"/><rect x="273.34" y="681.45" width="2.61" height="1.3" fill="#6a6a6a" fill-opacity="0.72"/><rect x="276.84" y="681.45" width="6.94" height="1.3" fill="#6a6a6a" fill-opacity="0.72"/><rect x="284.95" y="681.45" width="9.86" height="1.3" fill="#6a6a6a" fill-opacity="0.72"/><rect x="169.00" y="685.10" width="5.59" height="1.3" fill="#6a6a6a" fill-opacity="0.72"/><rect x="175.34" y="685.10" width="7.33" height="1.3" fill="#6a6a6a" fill-opacity="0.72"/><rect x="183.48" y="685.10" width="3.64" height="1.3" fill="#6a6a6a" fill-opacity="0.72"/><rect x="187.83" y="685.10" width="2.54" height="1.3" fill="#6a6a6a" fill-opacity="0.72"/><rect x="191.41" y="685.10" width="3.41" height="1.3" fill="#6a6a6a" fill-opacity="0.72"/><rect x="196.00" y="685.10" width="3.16" height="1.3" fill="#6a6a6a" fill-opacity="0.72"/><rect x="200.30" y="685.10" width="3.47" height="1.3" fill="#6a6a6a" fill-opacity="0.72"/><rect x="204.48" y="685.10" width="7.90" height="1.3" fill="#6a6a6a" fill-opacity="0.72"/><rect x="213.19" y="685.10" width="8.00" height="1.3" fill="#6a6a6a" fill-opacity="0.72"/><rect x="221.99" y="685.10" width="2.88" height="1.3" fill="#6a6a6a" fill-opacity="0.72"/><rect x="225.95" y="685.10" width="7.85" height="1.3" fill="#6a6a6a" fill-opacity="0.72"/><rect x="234.93" y="685.10" width="7.97" height="1.3" fill="#6a6a6a" fill-opacity="0.72"/><rect x="243.64" y="685.10" width="7.21" height="1.3" fill="#6a6a6a" fill-opacity="0.72"/><rect x="251.91" y="685.10" width="5.95" height="1.3" fill="#6a6a6a" fill-opacity="0.72"/><rect x="259.03" y="685.10" width="4.41" height="1.3" fill="#6a6a6a" fill-opacity="0.72"/><rect x="264.62" y="685.10" width="7.88" height="1.3" fill="#6a6a6a" fill-opacity="0.72"/><rect x="273.21" y="685.10" width="2.61" height="1.3" fill="#6a6a6a" fill-opacity="0.72"/><rect x="276.84" y="685.10" width="8.63" height="1.3" fill="#6a6a6a" fill-opacity="0.72"/><rect x="286.21" y="685.10" width="4.83" height="1.3" fill="#6a6a6a" fill-opacity="0.72"/><rect x="292.11" y="685.10" width="2.89" height="1.3" fill="#6a6a6a" fill-opacity="0.72"/><rect x="169.00" y="688.75" width="6.15" height="1.3" fill="#6a6a6a" fill-opacity="0.72"/><rect x="175.88" y="688.75" width="5.26" height="1.3" fill="#6a6a6a" fill-opacity="0.72"/><rect x="182.12" y="688.75" width="5.79" height="1.3" fill="#6a6a6a" fill-opacity="0.72"/><rect x="188.95" y="688.75" width="3.59" height="1.3" fill="#6a6a6a" fill-opacity="0.72"/><rect x="193.64" y="688.75" width="5.22" height="1.3" fill="#6a6a6a" fill-opacity="0.72"/><rect x="199.88" y="688.75" width="7.22" height="1.3" fill="#6a6a6a" fill-opacity="0.72"/><rect x="208.01" y="688.75" width="5.39" height="1.3" fill="#6a6a6a" fill-opacity="0.72"/><rect x="214.50" y="688.75" width="9.59" height="1.3" fill="#6a6a6a" fill-opacity="0.72"/><rect x="225.18" y="688.75" width="6.75" height="1.3" fill="#6a6a6a" fill-opacity="0.72"/><rect x="232.78" y="688.75" width="2.95" height="1.3" fill="#6a6a6a" fill-opacity="0.72"/><rect x="236.92" y="688.75" width="7.77" height="1.3" fill="#6a6a6a" fill-opacity="0.72"/><rect x="245.81" y="688.75" width="4.99" height="1.3" fill="#6a6a6a" fill-opacity="0.72"/><rect x="251.80" y="688.75" width="9.83" height="1.3" fill="#6a6a6a" fill-opacity="0.72"/><rect x="262.75" y="688.75" width="7.01" height="1.3" fill="#6a6a6a" fill-opacity="0.72"/><rect x="270.61" y="688.75" width="5.71" height="1.3" fill="#6a6a6a" fill-opacity="0.72"/><rect x="277.47" y="688.75" width="5.33" height="1.3" fill="#6a6a6a" fill-opacity="0.72"/><rect x="283.84" y="688.75" width="7.01" height="1.3" fill="#6a6a6a" fill-opacity="0.72"/><rect x="292.00" y="688.75" width="3.00" height="1.3" fill="#6a6a6a" fill-opacity="0.72"/><rect x="169.00" y="692.40" width="2.51" height="1.3" fill="#6a6a6a" fill-opacity="0.72"/><rect x="172.34" y="692.40" width="5.67" height="1.3" fill="#6a6a6a" fill-opacity="0.72"/><rect x="179.01" y="692.40" width="8.62" height="1.3" fill="#6a6a6a" fill-opacity="0.72"/><rect x="188.77" y="692.40" width="2.82" height="1.3" fill="#6a6a6a" fill-opacity="0.72"/><rect x="192.70" y="692.40" width="8.59" height="1.3" fill="#6a6a6a" fill-opacity="0.72"/><rect x="202.43" y="692.40" width="6.79" height="1.3" fill="#6a6a6a" fill-opacity="0.72"/><rect x="210.05" y="692.40" width="8.88" height="1.3" fill="#6a6a6a" fill-opacity="0.72"/><rect x="220.04" y="692.40" width="7.63" height="1.3" fill="#6a6a6a" fill-opacity="0.72"/><rect x="228.83" y="692.40" width="5.10" height="1.3" fill="#6a6a6a" fill-opacity="0.72"/><rect x="234.67" y="692.40" width="6.65" height="1.3" fill="#6a6a6a" fill-opacity="0.72"/><rect x="242.43" y="692.40" width="4.00" height="1.3" fill="#6a6a6a" fill-opacity="0.72"/><rect x="247.50" y="692.40" width="9.49" height="1.3" fill="#6a6a6a" fill-opacity="0.72"/><rect x="257.81" y="692.40" width="7.05" height="1.3" fill="#6a6a6a" fill-opacity="0.72"/><rect x="265.90" y="692.40" width="5.99" height="1.3" fill="#6a6a6a" fill-opacity="0.72"/><rect x="272.69" y="692.40" width="4.41" height="1.3" fill="#6a6a6a" fill-opacity="0.72"/><rect x="278.18" y="692.40" width="8.44" height="1.3" fill="#6a6a6a" fill-opacity="0.72"/><rect x="287.55" y="692.40" width="3.16" height="1.3" fill="#6a6a6a" fill-opacity="0.72"/><rect x="291.81" y="692.40" width="3.19" height="1.3" fill="#6a6a6a" fill-opacity="0.72"/><rect x="169.00" y="696.05" width="6.85" height="1.3" fill="#6a6a6a" fill-opacity="0.72"/><rect x="177.00" y="696.05" width="9.14" height="1.3" fill="#6a6a6a" fill-opacity="0.72"/><rect x="187.09" y="696.05" width="6.07" height="1.3" fill="#6a6a6a" fill-opacity="0.72"/><rect x="194.16" y="696.05" width="3.92" height="1.3" fill="#6a6a6a" fill-opacity="0.72"/><rect x="198.88" y="696.05" width="3.86" height="1.3" fill="#6a6a6a" fill-opacity="0.72"/><rect x="203.78" y="696.05" width="5.22" height="1.3" fill="#6a6a6a" fill-opacity="0.72"/><rect x="209.99" y="696.05" width="5.52" height="1.3" fill="#6a6a6a" fill-opacity="0.72"/><rect x="216.46" y="696.05" width="3.62" height="1.3" fill="#6a6a6a" fill-opacity="0.72"/><rect x="220.80" y="696.05" width="9.98" height="1.3" fill="#6a6a6a" fill-opacity="0.72"/><rect x="231.67" y="696.05" width="3.30" height="1.3" fill="#6a6a6a" fill-opacity="0.72"/><rect x="235.98" y="696.05" width="8.41" height="1.3" fill="#6a6a6a" fill-opacity="0.72"/><rect x="245.17" y="696.05" width="6.98" height="1.3" fill="#6a6a6a" fill-opacity="0.72"/><rect x="253.02" y="696.05" width="6.40" height="1.3" fill="#6a6a6a" fill-opacity="0.72"/><rect x="260.12" y="696.05" width="2.75" height="1.3" fill="#6a6a6a" fill-opacity="0.72"/><rect x="264.07" y="696.05" width="9.00" height="1.3" fill="#6a6a6a" fill-opacity="0.72"/><rect x="274.01" y="696.05" width="6.75" height="1.3" fill="#6a6a6a" fill-opacity="0.72"/><rect x="281.59" y="696.05" width="8.34" height="1.3" fill="#6a6a6a" fill-opacity="0.72"/><rect x="290.85" y="696.05" width="4.15" height="1.3" fill="#6a6a6a" fill-opacity="0.72"/><rect x="169.00" y="699.70" width="8.64" height="1.3" fill="#6a6a6a" fill-opacity="0.72"/><rect x="178.82" y="699.70" width="4.40" height="1.3" fill="#6a6a6a" fill-opacity="0.72"/><rect x="183.95" y="699.70" width="4.01" height="1.3" fill="#6a6a6a" fill-opacity="0.72"/><rect x="188.74" y="699.70" width="3.13" height="1.3" fill="#6a6a6a" fill-opacity="0.72"/><rect x="192.60" y="699.70" width="6.68" height="1.3" fill="#6a6a6a" fill-opacity="0.72"/><rect x="200.41" y="699.70" width="5.94" height="1.3" fill="#6a6a6a" fill-opacity="0.72"/><rect x="207.52" y="699.70" width="9.32" height="1.3" fill="#6a6a6a" fill-opacity="0.72"/><rect x="217.58" y="699.70" width="6.99" height="1.3" fill="#6a6a6a" fill-opacity="0.72"/><rect x="225.46" y="699.70" width="3.40" height="1.3" fill="#6a6a6a" fill-opacity="0.72"/><rect x="230.04" y="699.70" width="4.43" height="1.3" fill="#6a6a6a" fill-opacity="0.72"/><rect x="235.45" y="699.70" width="7.30" height="1.3" fill="#6a6a6a" fill-opacity="0.72"/><rect x="243.94" y="699.70" width="7.52" height="1.3" fill="#6a6a6a" fill-opacity="0.72"/><rect x="252.36" y="699.70" width="5.86" height="1.3" fill="#6a6a6a" fill-opacity="0.72"/><rect x="259.00" y="699.70" width="9.74" height="1.3" fill="#6a6a6a" fill-opacity="0.72"/><rect x="269.94" y="699.70" width="4.16" height="1.3" fill="#6a6a6a" fill-opacity="0.72"/><rect x="274.82" y="699.70" width="4.42" height="1.3" fill="#6a6a6a" fill-opacity="0.72"/><rect x="280.12" y="699.70" width="9.27" height="1.3" fill="#6a6a6a" fill-opacity="0.72"/><rect x="290.54" y="699.70" width="4.46" height="1.3" fill="#6a6a6a" fill-opacity="0.72"/><rect x="169.00" y="703.35" width="8.40" height="1.3" fill="#6a6a6a" fill-opacity="0.72"/><rect x="178.45" y="703.35" width="7.35" height="1.3" fill="#6a6a6a" fill-opacity="0.72"/><rect x="187.00" y="703.35" width="2.92" height="1.3" fill="#6a6a6a" fill-opacity="0.72"/><rect x="190.69" y="703.35" width="8.16" height="1.3" fill="#6a6a6a" fill-opacity="0.72"/><rect x="200.02" y="703.35" width="7.58" height="1.3" fill="#6a6a6a" fill-opacity="0.72"/><rect x="208.44" y="703.35" width="6.94" height="1.3" fill="#6a6a6a" fill-opacity="0.72"/><rect x="216.46" y="703.35" width="3.29" height="1.3" fill="#6a6a6a" fill-opacity="0.72"/><rect x="220.61" y="703.35" width="4.43" height="1.3" fill="#6a6a6a" fill-opacity="0.72"/><rect x="169.00" y="709.50" width="6.11" height="1.3" fill="#6a6a6a" fill-opacity="0.72"/><rect x="175.89" y="709.50" width="4.29" height="1.3" fill="#6a6a6a" fill-opacity="0.72"/><rect x="180.95" y="709.50" width="7.58" height="1.3" fill="#6a6a6a" fill-opacity="0.72"/><rect x="189.24" y="709.50" width="7.88" height="1.3" fill="#6a6a6a" fill-opacity="0.72"/><rect x="197.92" y="709.50" width="2.77" height="1.3" fill="#6a6a6a" fill-opacity="0.72"/><rect x="201.85" y="709.50" width="4.15" height="1.3" fill="#6a6a6a" fill-opacity="0.72"/><rect x="207.17" y="709.50" width="9.00" height="1.3" fill="#6a6a6a" fill-opacity="0.72"/><rect x="217.32" y="709.50" width="3.55" height="1.3" fill="#6a6a6a" fill-opacity="0.72"/><rect x="221.79" y="709.50" width="3.23" height="1.3" fill="#6a6a6a" fill-opacity="0.72"/><rect x="226.18" y="709.50" width="8.82" height="1.3" fill="#6a6a6a" fill-opacity="0.72"/><rect x="236.01" y="709.50" width="5.89" height="1.3" fill="#6a6a6a" fill-opacity="0.72"/><rect x="242.78" y="709.50" width="8.67" height="1.3" fill="#6a6a6a" fill-opacity="0.72"/><rect x="252.39" y="709.50" width="7.21" height="1.3" fill="#6a6a6a" fill-opacity="0.72"/><rect x="260.37" y="709.50" width="4.16" height="1.3" fill="#6a6a6a" fill-opacity="0.72"/><rect x="265.26" y="709.50" width="7.85" height="1.3" fill="#6a6a6a" fill-opacity="0.72"/><rect x="274.09" y="709.50" width="3.59" height="1.3" fill="#6a6a6a" fill-opacity="0.72"/><rect x="278.81" y="709.50" width="4.50" height="1.3" fill="#6a6a6a" fill-opacity="0.72"/><rect x="284.22" y="709.50" width="3.67" height="1.3" fill="#6a6a6a" fill-opacity="0.72"/><rect x="288.72" y="709.50" width="5.28" height="1.3" fill="#6a6a6a" fill-opacity="0.72"/><rect x="169.00" y="713.15" width="3.76" height="1.3" fill="#6a6a6a" fill-opacity="0.72"/><rect x="173.70" y="713.15" width="4.89" height="1.3" fill="#6a6a6a" fill-opacity="0.72"/><rect x="179.74" y="713.15" width="3.36" height="1.3" fill="#6a6a6a" fill-opacity="0.72"/><rect x="184.29" y="713.15" width="2.93" height="1.3" fill="#6a6a6a" fill-opacity="0.72"/><rect x="188.36" y="713.15" width="7.51" height="1.3" fill="#6a6a6a" fill-opacity="0.72"/><rect x="196.68" y="713.15" width="6.08" height="1.3" fill="#6a6a6a" fill-opacity="0.72"/><rect x="203.60" y="713.15" width="4.43" height="1.3" fill="#6a6a6a" fill-opacity="0.72"/><rect x="208.84" y="713.15" width="5.23" height="1.3" fill="#6a6a6a" fill-opacity="0.72"/><rect x="215.26" y="713.15" width="9.99" height="1.3" fill="#6a6a6a" fill-opacity="0.72"/><rect x="226.41" y="713.15" width="3.23" height="1.3" fill="#6a6a6a" fill-opacity="0.72"/><rect x="230.49" y="713.15" width="9.22" height="1.3" fill="#6a6a6a" fill-opacity="0.72"/><rect x="240.44" y="713.15" width="7.95" height="1.3" fill="#6a6a6a" fill-opacity="0.72"/><rect x="249.23" y="713.15" width="9.84" height="1.3" fill="#6a6a6a" fill-opacity="0.72"/><rect x="259.78" y="713.15" width="8.55" height="1.3" fill="#6a6a6a" fill-opacity="0.72"/><rect x="269.21" y="713.15" width="3.55" height="1.3" fill="#6a6a6a" fill-opacity="0.72"/><rect x="273.46" y="713.15" width="8.74" height="1.3" fill="#6a6a6a" fill-opacity="0.72"/><rect x="283.16" y="713.15" width="3.89" height="1.3" fill="#6a6a6a" fill-opacity="0.72"/><rect x="287.97" y="713.15" width="6.03" height="1.3" fill="#6a6a6a" fill-opacity="0.72"/><rect x="169.00" y="716.80" width="6.79" height="1.3" fill="#6a6a6a" fill-opacity="0.72"/><rect x="176.55" y="716.80" width="3.85" height="1.3" fill="#6a6a6a" fill-opacity="0.72"/><rect x="181.49" y="716.80" width="7.84" height="1.3" fill="#6a6a6a" fill-opacity="0.72"/><rect x="190.13" y="716.80" width="3.09" height="1.3" fill="#6a6a6a" fill-opacity="0.72"/><rect x="193.96" y="716.80" width="7.06" height="1.3" fill="#6a6a6a" fill-opacity="0.72"/><rect x="201.98" y="716.80" width="4.55" height="1.3" fill="#6a6a6a" fill-opacity="0.72"/><rect x="207.33" y="716.80" width="7.09" height="1.3" fill="#6a6a6a" fill-opacity="0.72"/><rect x="215.48" y="716.80" width="8.59" height="1.3" fill="#6a6a6a" fill-opacity="0.72"/><rect x="225.06" y="716.80" width="4.02" height="1.3" fill="#6a6a6a" fill-opacity="0.72"/><rect x="229.81" y="716.80" width="8.00" height="1.3" fill="#6a6a6a" fill-opacity="0.72"/><rect x="238.71" y="716.80" width="7.91" height="1.3" fill="#6a6a6a" fill-opacity="0.72"/><rect x="247.35" y="716.80" width="8.58" height="1.3" fill="#6a6a6a" fill-opacity="0.72"/><rect x="256.80" y="716.80" width="8.81" height="1.3" fill="#6a6a6a" fill-opacity="0.72"/><rect x="266.74" y="716.80" width="6.20" height="1.3" fill="#6a6a6a" fill-opacity="0.72"/><rect x="273.65" y="716.80" width="9.33" height="1.3" fill="#6a6a6a" fill-opacity="0.72"/><rect x="283.91" y="716.80" width="9.04" height="1.3" fill="#6a6a6a" fill-opacity="0.72"/><rect x="169.00" y="720.45" width="3.90" height="1.3" fill="#6a6a6a" fill-opacity="0.72"/><rect x="174.01" y="720.45" width="5.25" height="1.3" fill="#6a6a6a" fill-opacity="0.72"/><rect x="180.05" y="720.45" width="5.28" height="1.3" fill="#6a6a6a" fill-opacity="0.72"/><rect x="186.33" y="720.45" width="2.53" height="1.3" fill="#6a6a6a" fill-opacity="0.72"/><rect x="189.82" y="720.45" width="5.84" height="1.3" fill="#6a6a6a" fill-opacity="0.72"/><rect x="196.62" y="720.45" width="3.41" height="1.3" fill="#6a6a6a" fill-opacity="0.72"/><rect x="201.09" y="720.45" width="8.62" height="1.3" fill="#6a6a6a" fill-opacity="0.72"/><rect x="210.84" y="720.45" width="4.91" height="1.3" fill="#6a6a6a" fill-opacity="0.72"/><rect x="216.81" y="720.45" width="5.36" height="1.3" fill="#6a6a6a" fill-opacity="0.72"/><rect x="223.24" y="720.45" width="2.96" height="1.3" fill="#6a6a6a" fill-opacity="0.72"/><rect x="227.34" y="720.45" width="9.66" height="1.3" fill="#6a6a6a" fill-opacity="0.72"/><rect x="237.94" y="720.45" width="6.35" height="1.3" fill="#6a6a6a" fill-opacity="0.72"/><rect x="245.26" y="720.45" width="6.53" height="1.3" fill="#6a6a6a" fill-opacity="0.72"/><rect x="252.50" y="720.45" width="9.76" height="1.3" fill="#6a6a6a" fill-opacity="0.72"/><rect x="263.06" y="720.45" width="3.87" height="1.3" fill="#6a6a6a" fill-opacity="0.72"/><rect x="267.68" y="720.45" width="4.38" height="1.3" fill="#6a6a6a" fill-opacity="0.72"/><rect x="273.17" y="720.45" width="2.73" height="1.3" fill="#6a6a6a" fill-opacity="0.72"/><rect x="276.64" y="720.45" width="7.74" height="1.3" fill="#6a6a6a" fill-opacity="0.72"/><rect x="285.18" y="720.45" width="2.63" height="1.3" fill="#6a6a6a" fill-opacity="0.72"/><rect x="288.82" y="720.45" width="5.18" height="1.3" fill="#6a6a6a" fill-opacity="0.72"/><rect x="169.00" y="724.10" width="7.77" height="1.3" fill="#6a6a6a" fill-opacity="0.72"/><rect x="177.52" y="724.10" width="9.02" height="1.3" fill="#6a6a6a" fill-opacity="0.72"/><rect x="187.60" y="724.10" width="2.84" height="1.3" fill="#6a6a6a" fill-opacity="0.72"/><rect x="191.20" y="724.10" width="6.20" height="1.3" fill="#6a6a6a" fill-opacity="0.72"/><rect x="198.35" y="724.10" width="4.60" height="1.3" fill="#6a6a6a" fill-opacity="0.72"/><rect x="203.71" y="724.10" width="5.54" height="1.3" fill="#6a6a6a" fill-opacity="0.72"/><rect x="210.02" y="724.10" width="6.94" height="1.3" fill="#6a6a6a" fill-opacity="0.72"/><rect x="218.09" y="724.10" width="3.60" height="1.3" fill="#6a6a6a" fill-opacity="0.72"/><rect x="222.68" y="724.10" width="8.10" height="1.3" fill="#6a6a6a" fill-opacity="0.72"/><rect x="231.56" y="724.10" width="8.70" height="1.3" fill="#6a6a6a" fill-opacity="0.72"/><rect x="241.43" y="724.10" width="5.42" height="1.3" fill="#6a6a6a" fill-opacity="0.72"/><rect x="247.75" y="724.10" width="8.80" height="1.3" fill="#6a6a6a" fill-opacity="0.72"/><rect x="257.51" y="724.10" width="5.24" height="1.3" fill="#6a6a6a" fill-opacity="0.72"/><rect x="188.5" y="729" width="86.5" height="40" fill="#fff" stroke="#dcdcdc" stroke-width="0.6"/><rect x="199" y="731.8" width="65" height="1.6" fill="#444" fill-opacity=".8"/><rect x="193" y="736.5" width="77" height="0.5" fill="#ddd"/><rect x="193" y="741.5" width="77" height="0.5" fill="#ddd"/><rect x="193" y="746.5" width="77" height="0.5" fill="#ddd"/><rect x="193" y="751.5" width="77" height="0.5" fill="#ddd"/><rect x="192" y="736" width="0.6" height="30" fill="#999"/><rect x="207" y="754.5" width="6" height="21.5" fill="#5b8ed0"/><rect x="213" y="755.5" width="5" height="21.5" fill="#c9dbf2"/><rect x="224" y="747" width="6" height="29" fill="#5b8ed0"/><rect x="230" y="748" width="5" height="29" fill="#c9dbf2"/><rect x="242" y="752" width="6" height="24" fill="#5b8ed0"/><rect x="248" y="753" width="5" height="24" fill="#c9dbf2"/><rect x="260" y="740.5" width="6" height="35.5" fill="#5b8ed0"/><rect x="266" y="741.5" width="5" height="35.5" fill="#c9dbf2"/></svg>
<div class="a" style="left:364px;top:158px;width:523px;height:600px;background:#e3e3e6"></div>
<div class="a" style="left:478px;top:158px;width:394px;height:584px;background:#fff;overflow:hidden">
<div class="t" style="left:108px;top:-0.80px;font-size:13px;line-height:13px;color:#111;font-weight:normal;letter-spacing:0.075px;-webkit-text-stroke:0.2px #111">Region.</div>
<div class="a" style="left:86.5px;top:22.5px;width:5px;height:5px;border-radius:50%;background:#111"></div>
<div class="t" style="left:108px;top:17.40px;font-size:13px;line-height:13px;color:#111;font-weight:normal;letter-spacing:0.075px;-webkit-text-stroke:0.2px #111">Chapter 8 concludes the report by evaluating the</div>
<div class="t" style="left:108px;top:35.60px;font-size:13px;line-height:13px;color:#111;font-weight:normal;letter-spacing:0.075px;-webkit-text-stroke:0.2px #111">survey methods and technologies.</div>
<div class="t" style="left:64.5px;top:74.94px;font-size:14.25px;line-height:14.25px;color:#4a74aa;font-weight:normal;">SURVEY CAVETS AND LOOKING AHEAD</div>
<div class="t" style="left:64.5px;top:95.70px;font-size:13px;line-height:13px;color:#111;font-weight:normal;letter-spacing:0.075px;-webkit-text-stroke:0.2px #111">The 2009-2011 OHAS was a comprehensive effort that provides a rich source of information on how</div>
<div class="t" style="left:64.5px;top:113.75px;font-size:13px;line-height:13px;color:#111;font-weight:normal;letter-spacing:0.075px;-webkit-text-stroke:0.2px #111">transportation infrastructure is used. The survey methods and procedures used in the survey</div>
<div class="t" style="left:64.5px;top:131.80px;font-size:13px;line-height:13px;color:#111;font-weight:normal;letter-spacing:0.075px;-webkit-text-stroke:0.2px #111">conformed to industry standards. These included the use of state-of-the-art survey</div>
<div class="t" style="left:64.5px;top:149.85px;font-size:13px;line-height:13px;color:#111;font-weight:normal;letter-spacing:0.075px;-webkit-text-stroke:0.2px #111">technologies as well as stringent quality control checklists at each survey phase. The</div>
<div class="t" style="left:64.5px;top:167.90px;font-size:13px;line-height:13px;color:#111;font-weight:normal;letter-spacing:0.075px;-webkit-text-stroke:0.2px #111">survey results are rigorous and reliable; however, there are some</div>
<div class="t" style="left:64.5px;top:185.95px;font-size:13px;line-height:13px;color:#111;font-weight:normal;letter-spacing:0.075px;-webkit-text-stroke:0.2px #111">limitations that</div>
<div class="t" style="left:86px;top:286.30px;font-size:13px;line-height:13px;color:#111;font-weight:normal;letter-spacing:0.075px;-webkit-text-stroke:0.2px #111">2.</div>
<div class="t" style="left:108px;top:286.30px;font-size:13px;line-height:13px;color:#111;font-weight:normal;letter-spacing:0.075px;-webkit-text-stroke:0.2px #111">The sample design focused on achieving specific goals with respect to geography, household</div>
<div class="t" style="left:108px;top:304.35px;font-size:13px;line-height:13px;color:#111;font-weight:normal;letter-spacing:0.075px;-webkit-text-stroke:0.2px #111">size, and the number of household workers. Census data was used to weight the survey</div>
<div class="t" style="left:108px;top:322.40px;font-size:13px;line-height:13px;color:#111;font-weight:normal;letter-spacing:0.075px;-webkit-text-stroke:0.2px #111">to balance on other important demographic characteristics but lower participation rates by</div>
<div class="t" style="left:108px;top:340.45px;font-size:13px;line-height:13px;color:#111;font-weight:normal;letter-spacing:0.075px;-webkit-text-stroke:0.2px #111">minorities and young adults, as well as small geographic areas, limit the extent to which their</div>
<div class="t" style="left:108px;top:358.50px;font-size:13px;line-height:13px;color:#111;font-weight:normal;letter-spacing:0.075px;-webkit-text-stroke:0.2px #111">travel can be discussed in this report.</div>
<div class="t" style="left:86px;top:376.55px;font-size:13px;line-height:13px;color:#111;font-weight:normal;letter-spacing:0.075px;-webkit-text-stroke:0.2px #111">3.</div>
<div class="t" style="left:108px;top:376.55px;font-size:13px;line-height:13px;color:#111;font-weight:normal;letter-spacing:0.075px;-webkit-text-stroke:0.2px #111">By design, the survey focused on documenting typical weekday travel while school was in</div>
<div class="t" style="left:108px;top:394.60px;font-size:13px;line-height:13px;color:#111;font-weight:normal;letter-spacing:0.075px;-webkit-text-stroke:0.2px #111">session. This means that weekend, summer, and holiday travel details are missing from this</div>
<div class="t" style="left:108px;top:412.65px;font-size:13px;line-height:13px;color:#111;font-weight:normal;letter-spacing:0.075px;-webkit-text-stroke:0.2px #111">report. In addition, since each survey region was studied for a specific time period and the</div>
<div class="t" style="left:108px;top:430.70px;font-size:13px;line-height:13px;color:#111;font-weight:normal;letter-spacing:0.075px;-webkit-text-stroke:0.2px #111">households were assigned to specific days of week, it is not possible to</div>
<div class="t" style="left:108px;top:448.75px;font-size:13px;line-height:13px;color:#111;font-weight:normal;letter-spacing:0.075px;-webkit-text-stroke:0.2px #111">understand seasonal or daily (weekday) differences in travel.</div>
<div class="t" style="left:86px;top:466.80px;font-size:13px;line-height:13px;color:#111;font-weight:normal;letter-spacing:0.075px;-webkit-text-stroke:0.2px #111">4.</div>
<div class="t" style="left:108px;top:466.80px;font-size:13px;line-height:13px;color:#111;font-weight:normal;letter-spacing:0.075px;-webkit-text-stroke:0.2px #111">While the bulk of the travel patterns in this report remain valid today, smaller pockets of travel</div>
<div class="t" style="left:108px;top:484.85px;font-size:13px;line-height:13px;color:#111;font-weight:normal;letter-spacing:0.075px;-webkit-text-stroke:0.2px #111">have emerged since the survey was conducted in 2009-2011 such as ride-hailing and bike-</div>
<div class="t" style="left:108px;top:502.90px;font-size:13px;line-height:13px;color:#111;font-weight:normal;letter-spacing:0.075px;-webkit-text-stroke:0.2px #111">car-sharing services.</div>
<div class="t" style="left:64.5px;top:530.50px;font-size:13px;line-height:13px;color:#111;font-weight:normal;letter-spacing:0.075px;-webkit-text-stroke:0.2px #111">More sophisticated survey technologies and methods are now available to help correct these</div>
<div class="t" style="left:64.5px;top:548.55px;font-size:13px;line-height:13px;color:#111;font-weight:normal;letter-spacing:0.075px;-webkit-text-stroke:0.2px #111">shortcomings. In particular, agencies today are migrating to a multi-survey design that can</div>
<div class="t" style="left:64.5px;top:566.60px;font-size:13px;line-height:13px;color:#111;font-weight:normal;letter-spacing:0.075px;-webkit-text-stroke:0.2px #111">provide seasonal and weekend data (if desired) as well as address</div>
<div class="a" style="left:85px;top:210.3px;width:420px;height:19px;border:1.3px solid #3f8ff6;border-radius:4px;background:#fff"><div class="a" style="left:0.7px;top:0.7px;right:0.7px;bottom:0.7px;background:#000;border-radius:3px"></div></div>
<div class="a" style="left:105.5px;top:229.60000000000002px;width:420px;height:17.6px;border:1.3px solid #3f8ff6;border-radius:4px;background:#fff"><div class="a" style="left:0.7px;top:0.7px;right:0.7px;bottom:0.7px;background:#000;border-radius:3px"></div></div>
<div class="a" style="left:105.5px;top:247.39999999999998px;width:420px;height:17.6px;border:1.3px solid #3f8ff6;border-radius:4px;background:#fff"><div class="a" style="left:0.7px;top:0.7px;right:0.7px;bottom:0.7px;background:#000;border-radius:3px"></div></div>
<div class="a" style="left:105.5px;top:265.2px;width:420px;height:17.8px;border:1.3px solid #3f8ff6;border-radius:4px;background:#fff"><div class="a" style="left:0.7px;top:0.7px;right:0.7px;bottom:0.7px;background:#000;border-radius:3px"></div></div>
</div>
<div class="a" style="left:872px;top:158px;width:15px;height:584px;background:#f7f7f8;border-left:1px solid #e8e8ea"></div>
<div class="a" style="left:876px;top:184px;width:8px;height:18px;background:#c2c2c4;border-radius:4px"></div>
<div class="a" style="left:364px;top:742px;width:523px;height:16px;background:#f5f5f7;border-top:1px solid #e8e8ea"></div>
<div class="a" style="left:368px;top:745px;width:264px;height:8px;background:#c6c6c8;border-radius:4px"></div>
<div class="a" style="left:629.5px;top:322.6px;width:258.5px;height:38.7px;background:#fff;border:1px solid #e2e2e5;border-radius:6px;box-shadow:0 1px 4px rgba(0,0,0,.08)"></div>
<div class="a" style="left:644px;top:332px;width:20px;height:20px;background:#ffdb00;border-radius:50%"></div>
<div class="a" style="left:680px;top:332px;width:20px;height:20px;background:#f87a7a;border-radius:50%"></div>
<div class="a" style="left:716px;top:332px;width:20px;height:20px;background:#3fe3a4;border-radius:50%"></div>
<div class="a" style="left:752px;top:332px;width:20px;height:20px;background:#6ccdfb;border-radius:50%"></div>
<div class="a" style="left:782.2px;top:326.3px;width:55.7px;height:31.3px;background:#e8f0fd;border:1px solid #3b8ef3;border-radius:4px"></div>
<div class="a" style="left:787px;top:332px;width:20px;height:20px;background:#000;border-radius:50%"></div>
<div class="a" style="left:814px;top:333px;width:18px;height:18px;background:conic-gradient(from 0deg, #f9e56a, #fbb26a 45deg, #f86a6a 90deg, #e070e0 140deg, #9a6cf0 175deg, #5aa8f0 210deg, #6ad0f0 240deg, #56d88a 280deg, #b8e86a 320deg, #f9e56a);border-radius:50%"></div>
<div class="a" style="left:817px;top:336px;width:12px;height:12px;background:radial-gradient(circle, rgba(255,255,255,.9), rgba(255,255,255,0) 70%);border-radius:50%"></div>
<div class="a" style="left:842px;top:332px;width:1px;height:20px;background:#e0e0e3"></div>
<svg class="a" style="left:853px;top:333px;" width="21" height="17" viewBox="0 0 21 17"><rect x="1" y="1" width="19" height="15" rx="1" fill="none" stroke="#1c1e26" stroke-width="2"/><path d="M1 5.5 H20 M14 5.5 V16" stroke="#1c1e26" stroke-width="2"/></svg>
<div class="a" style="left:887px;top:158px;width:270px;height:600px;background:#f5f5f7"></div>
<div class="a" style="left:886px;top:158px;width:1px;height:600px;background:#e2e2e5"></div>
<div class="t" style="left:720px;width:600px;text-align:center;top:170.94px;font-size:14.6px;line-height:14.6px;color:#3b3f4b;font-weight:bold;">Highlight</div>
<div class="a" style="left:887px;top:197px;width:264px;height:1px;background:#e4e4e7"></div>
<div class="t" style="left:904.3px;top:211.46px;font-size:12.8px;line-height:12.8px;color:#4a4d56;font-weight:bold;">Color</div>
<div class="a" style="left:910px;top:243.7px;width:20px;height:20px;background:#ffdb00;border-radius:50%"></div>
<div class="a" style="left:954px;top:243.7px;width:20px;height:20px;background:#f87a7a;border-radius:50%"></div>
<div class="a" style="left:998px;top:243.7px;width:20px;height:20px;background:#3fe3a4;border-radius:50%"></div>
<div class="a" style="left:1042px;top:243.7px;width:20px;height:20px;background:#6ccdfb;border-radius:50%"></div>
<div class="a" style="left:1080.5px;top:238px;width:55px;height:31px;background:#e8f0fd;border:1px solid #3b8ef3;border-radius:3px"></div>
<div class="a" style="left:1085px;top:243.7px;width:20px;height:20px;background:#000;border-radius:50%"></div>
<div class="a" style="left:1112px;top:244.5px;width:18px;height:18px;background:conic-gradient(from 0deg, #f9e56a, #fbb26a 45deg, #f86a6a 90deg, #e070e0 140deg, #9a6cf0 175deg, #5aa8f0 210deg, #6ad0f0 240deg, #56d88a 280deg, #b8e86a 320deg, #f9e56a);border-radius:50%"></div>
<div class="a" style="left:1115px;top:247.5px;width:12px;height:12px;background:radial-gradient(circle, rgba(255,255,255,.9), rgba(255,255,255,0) 70%);border-radius:50%"></div>
<svg class="a" style="left:907px;top:287px;" width="15" height="15" viewBox="0 0 15 15"><rect x="0.8" y="0.8" width="13.4" height="13.4" fill="none" stroke="#3a3e4a" stroke-width="1.6"/><rect x="3.5" y="7.5" width="4" height="4" fill="#3a3e4a"/><rect x="7.5" y="3.5" width="4" height="4" fill="#3a3e4a"/></svg>
<div class="a" style="left:928px;top:292px;width:112px;height:4px;background:#1570ef;border-radius:2px"></div>
<div class="a" style="left:1034px;top:288px;width:12px;height:12px;background:#fff;border:2px solid #1570ef;border-radius:50%"></div>
<div class="a" style="left:1056.8px;top:278.6px;width:78.6px;height:30.6px;background:#fff;border:1px solid #e3e3e6;border-radius:5px"></div>
<div class="t" style="left:1065.3px;top:287.43px;font-size:13.9px;line-height:13.9px;color:#222;font-weight:normal;">100%</div>
<svg class="a" style="left:1114px;top:291px;" width="10" height="6" viewBox="0 0 10 6"><path d="M1 1 L5 5 L9 1" fill="none" stroke="#444" stroke-width="1.3"/></svg>
</div></body></html>
